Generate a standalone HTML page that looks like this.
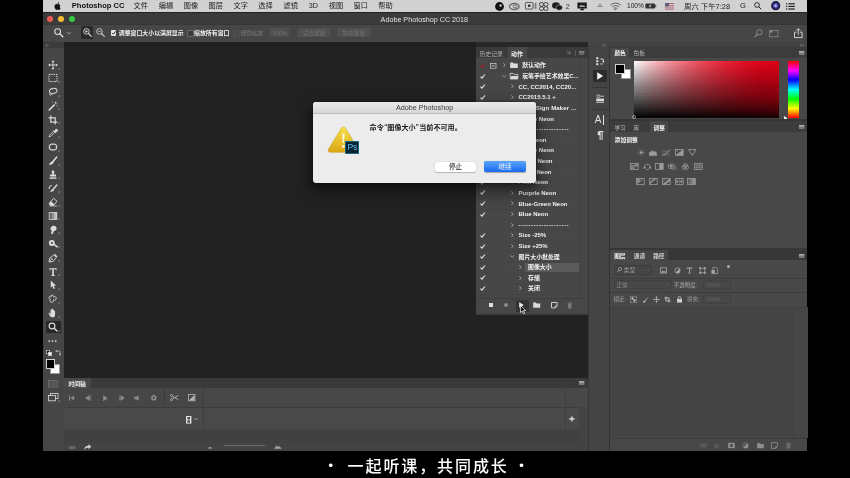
<!DOCTYPE html>
<html lang="zh-CN"><head><meta charset="utf-8"><title>Adobe Photoshop CC 2018</title>
<style>
html,body{margin:0;padding:0;background:#000;}
body{width:850px;height:478px;overflow:hidden;position:relative;font-family:"Liberation Sans","Noto Sans CJK SC",sans-serif;}
#root{position:absolute;left:0;top:0;width:850px;height:478px;overflow:hidden;background:#000;filter:blur(.4px);}
#root div,#root svg,#root span.t{position:absolute;display:block;}
span.t{white-space:nowrap;}
svg{overflow:visible;}
</style></head><body><div id="root">

<div style="left:42.6px;top:0px;width:764.6px;height:11.6px;background:#d1d1d1;"></div>
<svg style="left:54.2px;top:1.5px;" width="7.2" height="8.6" viewBox="0 0 12 14"><path d="M6 4C5 3.200 3.600 3 2.400 3.800C.6 5 .4 7.600 1.400 9.800C2.200 11.600 3.200 13 4.400 13C5.200 13 5.400 12.500 6.300 12.500C7.200 12.500 7.400 13 8.200 13C9.400 13 10.400 11.400 11 10C9.600 9.400 9 7.400 10.600 5.600C9.600 3.600 7.600 3.200 6 4Z" fill="#111"/><path d="M6 3.400C6 1.800 7 .6 8.400 .4C8.600 2 7.400 3.400 6 3.400Z" fill="#111"/></svg>
<span class="t" style="left:71.8px;top:1.49px;font-size:7.6px;line-height:10px;color:#111;font-weight:bold;">Photoshop CC</span>
<span class="t" style="left:133.6px;top:1.12px;font-size:7.2px;line-height:9px;color:#1a1a1a;font-weight:normal;">文件</span>
<span class="t" style="left:158.7px;top:1.12px;font-size:7.2px;line-height:9px;color:#1a1a1a;font-weight:normal;">编辑</span>
<span class="t" style="left:183.8px;top:1.12px;font-size:7.2px;line-height:9px;color:#1a1a1a;font-weight:normal;">图像</span>
<span class="t" style="left:208.6px;top:1.12px;font-size:7.2px;line-height:9px;color:#1a1a1a;font-weight:normal;">图层</span>
<span class="t" style="left:233.5px;top:1.12px;font-size:7.2px;line-height:9px;color:#1a1a1a;font-weight:normal;">文字</span>
<span class="t" style="left:258.3px;top:1.12px;font-size:7.2px;line-height:9px;color:#1a1a1a;font-weight:normal;">选择</span>
<span class="t" style="left:283.5px;top:1.12px;font-size:7.2px;line-height:9px;color:#1a1a1a;font-weight:normal;">滤镜</span>
<span class="t" style="left:308.8px;top:1.12px;font-size:7.2px;line-height:9px;color:#1a1a1a;font-weight:normal;">3D</span>
<span class="t" style="left:328.8px;top:1.12px;font-size:7.2px;line-height:9px;color:#1a1a1a;font-weight:normal;">视图</span>
<span class="t" style="left:353.5px;top:1.12px;font-size:7.2px;line-height:9px;color:#1a1a1a;font-weight:normal;">窗口</span>
<span class="t" style="left:378.3px;top:1.12px;font-size:7.2px;line-height:9px;color:#1a1a1a;font-weight:normal;">帮助</span>
<svg style="left:494.6px;top:1.6px;" width="9" height="9" viewBox="0 0 9 9"><circle cx="4.5" cy="4.5" r="4.4" fill="#111"/><circle cx="5.6" cy="3.6" r="1.3" fill="#bbb"/></svg>
<svg style="left:509.4px;top:2.6px;" width="10.6" height="7" viewBox="0 0 10.6 7"><ellipse cx="5.3" cy="3.5" rx="4.8" ry="3" fill="none" stroke="#6a6a6a" stroke-width="1.3"/><ellipse cx="6.2" cy="3.5" rx="2" ry="1.4" fill="none" stroke="#6a6a6a" stroke-width="1"/></svg>
<svg style="left:524.7px;top:2.2px;" width="11.2" height="7.6" viewBox="0 0 11.2 7.6"><rect x=".4" y=".5" width="7.600" height="6.600" rx=".8" fill="none" stroke="#333" stroke-width=".75"/><circle cx="4.200" cy="3.800" r="1.300" fill="#222"/><path d="M9 2.200v.9M9 4.600v.9" stroke="#333" stroke-width=".8"/><path d="M10.800 .6v6.400" stroke="#333" stroke-width=".8"/></svg>
<svg style="left:538.8px;top:1.6px;" width="9.4" height="9" viewBox="0 0 9.4 9"><g fill="none" stroke="#2a2a2a" stroke-width=".85"><rect x=".5" y=".5" width="4" height="3.800" rx="1.700"/><rect x="4.900" y=".5" width="4" height="3.800" rx="1.700"/><rect x=".5" y="4.700" width="4" height="3.800" rx="1.700"/><rect x="4.900" y="4.700" width="4" height="3.800" rx="1.700"/></g></svg>
<svg style="left:551.8px;top:1.8px;" width="10.6" height="8.6" viewBox="0 0 10.6 8.6"><ellipse cx="4" cy="3.4" rx="3.900" ry="3.200" fill="#1d1d1d"/><ellipse cx="7.2" cy="5.6" rx="3.300" ry="2.700" fill="#1d1d1d" stroke="#d1d1d1" stroke-width=".5"/></svg>
<span class="t" style="left:565.8px;top:2.12px;font-size:7.2px;line-height:9px;color:#333;font-weight:normal;">2</span>
<svg style="left:577px;top:1.6px;" width="10.2" height="8.8" viewBox="0 0 10.2 8.8"><path d="M.4.4h9.400v6h-9.400z" fill="#1b1b1b"/><path d="M2 5l2.200-2.500 1.600 1.500 1.200-1 1.400 2z" fill="#aaa"/><path d="M3 8.200h4.200l-.8-1.700h-2.600z" fill="#1b1b1b"/></svg>
<svg style="left:597px;top:3.2px;" width="6" height="6" viewBox="0 0 6 6"><path d="M3 .3l1.800 2h-3.600z" fill="#8e8e8e"/><rect x=".3" y="2.700" width="5.400" height="1.400" rx=".6" fill="#8e8e8e"/><path d="M2.200 4.500h1.600l-.8 1.200z" fill="#a0a0a0"/></svg>
<svg style="left:610px;top:2px;" width="11" height="8" viewBox="0 0 11 8"><g fill="none" stroke="#484848" stroke-width=".8" stroke-linecap="round"><path d="M.6 2.900a7 7 0 0 1 9.800 0"/><path d="M2.300 4.700a4.600 4.600 0 0 1 6.400 0"/><path d="M4 6.300a2.200 2.200 0 0 1 3 0"/></g><circle cx="5.500" cy="7.400" r=".7" fill="#444"/></svg>
<span class="t" style="left:627px;top:1.32px;font-size:6.6px;line-height:9px;color:#222;font-weight:normal;">100%</span>
<svg style="left:645.4px;top:3px;" width="11.4" height="6" viewBox="0 0 11.4 6"><rect x=".4" y=".4" width="9.600" height="5.200" rx="1" fill="#333"/><rect x="10.300" y="1.800" width=".9" height="2.400" fill="#333"/><path d="M5.600 .8l-2 2.500h1.500l-.7 1.900 2.200-2.600h-1.500z" fill="#d1d1d1"/></svg>
<svg style="left:664.6px;top:2.6px;" width="9" height="6.6" viewBox="0 0 9 6.6"><rect x="0" y="0.00" width="9" height=".94" fill="#ac5e6a"/><rect x="0" y="0.94" width="9" height=".94" fill="#d6cacc"/><rect x="0" y="1.88" width="9" height=".94" fill="#ac5e6a"/><rect x="0" y="2.82" width="9" height=".94" fill="#d6cacc"/><rect x="0" y="3.76" width="9" height=".94" fill="#ac5e6a"/><rect x="0" y="4.70" width="9" height=".94" fill="#d6cacc"/><rect x="0" y="5.64" width="9" height=".94" fill="#ac5e6a"/><rect x="0" y="0" width="4" height="3.500" fill="#5e5c7c"/></svg>
<span class="t" style="left:684px;top:2.05px;font-size:7.4px;line-height:9px;color:#1a1a1a;font-weight:normal;">周六 下午7:28</span>
<span class="t" style="left:740px;top:1.49px;font-size:7.6px;line-height:10px;color:#222;font-weight:normal;">G</span>
<svg style="left:753.5px;top:2.2px;" width="7.4" height="7.4" viewBox="0 0 7.4 7.4"><circle cx="3" cy="3" r="2.400" fill="none" stroke="#222" stroke-width=".9"/><path d="M4.800 4.800l2.200 2.200" stroke="#222" stroke-width="1" stroke-linecap="round"/></svg>
<svg style="left:770.7px;top:1.3px;" width="9.4" height="9.4" viewBox="0 0 9.4 9.4"><defs><radialGradient id="siri" cx=".5" cy=".5" r=".5"><stop offset="0" stop-color="#f0e8f8"/><stop offset=".3" stop-color="#7a6cd0"/><stop offset=".6" stop-color="#2a2c78"/><stop offset="1" stop-color="#101228"/></radialGradient></defs><circle cx="4.700" cy="4.700" r="4.600" fill="url(#siri)"/></svg>
<svg style="left:785.8px;top:2.6px;" width="9" height="7" viewBox="0 0 9 7"><g fill="#222"><rect x="0" y=".2" width="1.300" height="1.200"/><rect x="2.400" y=".2" width="6.400" height="1.200"/><rect x="0" y="2.800" width="1.300" height="1.200"/><rect x="2.400" y="2.800" width="6.400" height="1.200"/><rect x="0" y="5.400" width="1.300" height="1.200"/><rect x="2.400" y="5.400" width="6.400" height="1.200"/></g></svg>
<div style="left:42.6px;top:11.6px;width:764.6px;height:12.6px;background:#3b3b3b;"></div>
<div style="left:43px;top:11.6px;width:764px;height:0.6px;background:#222;"></div>
<div style="left:47.3px;top:16.2px;width:6.2px;height:6.2px;background:#ee5b54;border-radius:50%"></div>
<div style="left:58.1px;top:16.2px;width:6.2px;height:6.2px;background:#f5bd2f;border-radius:50%"></div>
<div style="left:68.80000000000001px;top:16.2px;width:6.2px;height:6.2px;background:#2fc840;border-radius:50%"></div>
<span class="t" style="left:380.6px;top:15.12px;font-size:7.2px;line-height:9px;color:#e0e0e0;font-weight:normal;">Adobe Photoshop CC 2018</span>
<div style="left:42.6px;top:24.2px;width:764.6px;height:18.2px;background:#464646;"></div>
<div style="left:43px;top:23.8px;width:764px;height:0.8px;background:#363636;"></div>
<svg style="left:54px;top:28px;" width="9.5" height="9.5" viewBox="0 0 9.5 9.5"><circle cx="3.600" cy="3.600" r="2.900" fill="none" stroke="#ddd" stroke-width="1.100"/><path d="M5.800 5.800l3 3" stroke="#ddd" stroke-width="1.400" stroke-linecap="round"/></svg>
<svg style="left:66.5px;top:32.4px;" width="4" height="2.6" viewBox="0 0 4 2.6"><path d="M.3.300l1.700 1.700 1.700-1.700" fill="none" stroke="#bbb" stroke-width=".8"/></svg>
<div style="left:80.6px;top:26.4px;width:12.4px;height:12.6px;background:#2a2a2a;border-radius:1px"></div>
<svg style="left:82.6px;top:28.4px;" width="9" height="9" viewBox="0 0 9 9"><circle cx="3.400" cy="3.400" r="2.800" fill="none" stroke="#ddd" stroke-width=".9"/><path d="M5.500 5.500l2.800 2.800" stroke="#ddd" stroke-width="1.200" stroke-linecap="round"/><path d="M2 3.400h2.800M3.400 2v2.800" stroke="#ddd" stroke-width=".8"/></svg>
<svg style="left:96px;top:28.4px;" width="9" height="9" viewBox="0 0 9 9"><circle cx="3.400" cy="3.400" r="2.800" fill="none" stroke="#ccc" stroke-width=".9"/><path d="M5.500 5.500l2.800 2.800" stroke="#ccc" stroke-width="1.200" stroke-linecap="round"/><path d="M2 3.400h2.800" stroke="#ccc" stroke-width=".8"/></svg>
<div style="left:110.6px;top:30.2px;width:5.6px;height:5.6px;background:#e6e6e6;border-radius:1px"></div>
<svg style="left:110.6px;top:30.2px;" width="5.6" height="5.6" viewBox="0 0 5.6 5.6"><path d="M1.200 2.900l1.200 1.300 2.200-2.800" fill="none" stroke="#222" stroke-width="1"/></svg>
<span class="t" style="left:118.8px;top:29.05px;font-size:5.9px;line-height:8px;color:#eee;font-weight:bold;">调整窗口大小以满屏显示</span>
<div style="left:187.2px;top:30.2px;width:5.2px;height:5.2px;background:#3a3a3a;border:.5px solid #666;border-radius:1px"></div>
<span class="t" style="left:194.1px;top:29.05px;font-size:5.9px;line-height:8px;color:#eee;font-weight:bold;">缩放所有窗口</span>
<div style="left:233px;top:30.4px;width:5px;height:5px;background:#484848;border:.5px solid #4f4f4f"></div>
<span class="t" style="left:240.6px;top:29.15px;font-size:5.6px;line-height:8px;color:#777;font-weight:normal;">细微缩放</span>
<div style="left:270px;top:28.2px;width:19.2px;height:8.6px;background:#505050;border-radius:1.500px"></div>
<span class="t" style="left:270px;top:29.15px;width:19.2px;text-align:center;font-size:5.6px;line-height:8px;color:#747474;font-weight:normal;">100%</span>
<div style="left:298px;top:28.2px;width:32.4px;height:8.6px;background:#505050;border-radius:1.500px"></div>
<span class="t" style="left:298px;top:29.15px;width:32.4px;text-align:center;font-size:5.6px;line-height:8px;color:#747474;font-weight:normal;">适合屏幕</span>
<div style="left:337px;top:28.2px;width:33.6px;height:8.6px;background:#505050;border-radius:1.500px"></div>
<span class="t" style="left:337px;top:29.15px;width:33.6px;text-align:center;font-size:5.6px;line-height:8px;color:#747474;font-weight:normal;">填充屏幕</span>
<svg style="left:753.5px;top:29.4px;" width="9" height="8.4" viewBox="0 0 9 8.4"><circle cx="5.400" cy="3.300" r="2.700" fill="none" stroke="#8a8a8a" stroke-width="1"/><path d="M3.400 5.300l-2.600 2.600" stroke="#8a8a8a" stroke-width="1.200" stroke-linecap="round"/></svg>
<svg style="left:768.8px;top:29.8px;" width="9.4" height="7.2" viewBox="0 0 9.4 7.2"><rect x=".4" y=".4" width="8.600" height="6.400" fill="none" stroke="#8a8a8a" stroke-width=".8"/><rect x="1" y="1" width="2.600" height="1.600" fill="#8a8a8a"/></svg>
<svg style="left:793.5px;top:27.6px;" width="8.6" height="10" viewBox="0 0 8.6 10"><path d="M2.500 4.200h-2v5.400h7.600v-5.400h-2" fill="none" stroke="#e0e0e0" stroke-width=".9"/><path d="M4.300 6.600v-5.800M2.400 2.500l1.900-1.900 1.900 1.900" fill="none" stroke="#e0e0e0" stroke-width=".9"/></svg>
<div style="left:43px;top:42.4px;width:764px;height:408.8px;background:#282828;"></div>
<div style="left:64px;top:47.2px;width:524px;height:330.6px;background:#222222;"></div>
<div style="left:64px;top:42.4px;width:412px;height:5px;background:#1f1f1f;"></div>
<div style="left:42.6px;top:42.4px;width:21.2px;height:408.8px;background:#464646;"></div>
<div style="left:42.6px;top:42.4px;width:21.2px;height:5.8px;background:#3b3b3b;"></div>
<svg style="left:45.2px;top:44px;" width="4" height="3" viewBox="0 0 4 3"><path d="M.3.300l1.200 1.200-1.200 1.200M2 .3l1.200 1.200-1.200 1.200" fill="none" stroke="#aaa" stroke-width=".5"/></svg>
<svg style="left:47.7px;top:60.3px;" width="10" height="10" viewBox="0 0 10 10"><path d="M5 1v8M1 5h8" stroke="#dcdcdc" stroke-width=".9"/><path d="M5 .2l1.500 1.800h-3zM5 9.800l1.500-1.800h-3zM.2 5l1.800-1.500v3zM9.800 5l-1.800-1.500v3z" fill="#dcdcdc"/></svg>
<svg style="left:58.2px;top:67.89999999999999px;" width="1.6" height="1.6" viewBox="0 0 1.6 1.6"><path d="M1.600 0v1.600h-1.600z" fill="#aaa"/></svg>
<svg style="left:47.7px;top:73.2px;" width="10" height="10" viewBox="0 0 10 10"><rect x="1" y="1.400" width="8" height="7.200" fill="none" stroke="#dcdcdc" stroke-width="1" stroke-dasharray="1.400 .9"/></svg>
<svg style="left:58.2px;top:80.8px;" width="1.6" height="1.6" viewBox="0 0 1.6 1.6"><path d="M1.600 0v1.600h-1.600z" fill="#aaa"/></svg>
<svg style="left:47.7px;top:87.1px;" width="10" height="10" viewBox="0 0 10 10"><ellipse cx="5.200" cy="4" rx="3.800" ry="2.600" fill="none" stroke="#dcdcdc" stroke-width="1" transform="rotate(-12 5 4)"/><path d="M2.600 6c-1.200.4-1.400 1.600-.4 2.200 1 .4 1.600-.6 1-1.400" fill="none" stroke="#dcdcdc" stroke-width=".8"/></svg>
<svg style="left:58.2px;top:94.69999999999999px;" width="1.6" height="1.6" viewBox="0 0 1.6 1.6"><path d="M1.600 0v1.600h-1.600z" fill="#aaa"/></svg>
<svg style="left:47.7px;top:100.7px;" width="10" height="10" viewBox="0 0 10 10"><path d="M1.200 9l5-5" stroke="#dcdcdc" stroke-width="1.700" stroke-linecap="round"/><path d="M7.600 .6v2.200M6.500 1.700h2.200M8.600 4.400l.9.9M4.200 .9l.8.8M8.800 2.800h.9" stroke="#dcdcdc" stroke-width=".7"/></svg>
<svg style="left:58.2px;top:108.3px;" width="1.6" height="1.6" viewBox="0 0 1.6 1.6"><path d="M1.600 0v1.600h-1.600z" fill="#aaa"/></svg>
<svg style="left:47.7px;top:114.7px;" width="10" height="10" viewBox="0 0 10 10"><path d="M2.800 .6v6.600h6.600M.6 2.800h6.600v6.600" fill="none" stroke="#dcdcdc" stroke-width="1.200"/></svg>
<svg style="left:58.2px;top:122.3px;" width="1.6" height="1.6" viewBox="0 0 1.6 1.6"><path d="M1.600 0v1.600h-1.600z" fill="#aaa"/></svg>
<svg style="left:47.7px;top:128px;" width="10" height="10" viewBox="0 0 10 10"><path d="M1 9l.6-1.800 3.800-3.800 1.200 1.200-3.800 3.800z" fill="none" stroke="#dcdcdc" stroke-width=".8"/><path d="M5.200 2.600l2.200 2.200M6 3.400l1.500-1.800c.5-.6 1.400-.6 1.800-.1.500.5.400 1.300-.1 1.800l-1.800 1.500z" fill="#dcdcdc" stroke="#dcdcdc" stroke-width=".6"/></svg>
<svg style="left:58.2px;top:135.6px;" width="1.6" height="1.6" viewBox="0 0 1.6 1.6"><path d="M1.600 0v1.600h-1.600z" fill="#aaa"/></svg>
<svg style="left:47.7px;top:142px;" width="10" height="10" viewBox="0 0 10 10"><rect x="1.600" y="2.200" width="6.800" height="5.600" rx="1.800" fill="none" stroke="#dcdcdc" stroke-width="1.100"/><path d="M.6 4h1M.6 6h1M8.400 4h1M8.400 6h1M4 1.200v1M6 1.200v1M4 7.800v1M6 7.800v1" stroke="#dcdcdc" stroke-width=".7"/></svg>
<svg style="left:58.2px;top:149.6px;" width="1.6" height="1.6" viewBox="0 0 1.6 1.6"><path d="M1.600 0v1.600h-1.600z" fill="#aaa"/></svg>
<svg style="left:47.7px;top:155.9px;" width="10" height="10" viewBox="0 0 10 10"><path d="M8.600 1.200l-3.800 4.600" stroke="#dcdcdc" stroke-width="1.600" stroke-linecap="round"/><path d="M4.400 5.400c-1.800-.2-2 1.800-3.600 3 2 .8 4.400-.2 4.800-1.800z" fill="#dcdcdc"/></svg>
<svg style="left:58.2px;top:163.5px;" width="1.6" height="1.6" viewBox="0 0 1.6 1.6"><path d="M1.600 0v1.600h-1.600z" fill="#aaa"/></svg>
<svg style="left:47.7px;top:169.5px;" width="10" height="10" viewBox="0 0 10 10"><path d="M3.600 1.800a1.400 1.400 0 1 1 2.800 0c0 .9-.7 1.400-.7 2.600h2.300v2h-6v-2h2.300c0-1.200-.7-1.700-.7-2.600z" fill="#dcdcdc"/><rect x="1.600" y="7.400" width="6.800" height="1.400" fill="#dcdcdc"/></svg>
<svg style="left:58.2px;top:177.1px;" width="1.6" height="1.6" viewBox="0 0 1.6 1.6"><path d="M1.600 0v1.600h-1.600z" fill="#aaa"/></svg>
<svg style="left:47.7px;top:183.5px;" width="10" height="10" viewBox="0 0 10 10"><path d="M8.800 1l-3.400 4" stroke="#dcdcdc" stroke-width="1.400" stroke-linecap="round"/><path d="M5 5c-1.500-.2-1.700 1.500-3 2.500 1.700.7 3.700-.2 4-1.500z" fill="#dcdcdc"/><path d="M1.200 4.200a2.800 2.800 0 0 1 2.800-2.800" fill="none" stroke="#dcdcdc" stroke-width=".9"/><path d="M.2 3.400l1 1.600 1.200-1.200z" fill="#dcdcdc"/></svg>
<svg style="left:58.2px;top:191.1px;" width="1.6" height="1.6" viewBox="0 0 1.6 1.6"><path d="M1.600 0v1.600h-1.600z" fill="#aaa"/></svg>
<svg style="left:47.7px;top:197.3px;" width="10" height="10" viewBox="0 0 10 10"><path d="M5.600 1.200l3.400 3-3.400 4.200h-2.800l-1.800-1.600z" fill="none" stroke="#dcdcdc" stroke-width=".9"/><path d="M3 4.200l3.200 3-1 1.200h-2.400l-1.800-1.600z" fill="#dcdcdc"/><path d="M1.400 9h7.600" stroke="#dcdcdc" stroke-width=".7"/></svg>
<svg style="left:58.2px;top:204.9px;" width="1.6" height="1.6" viewBox="0 0 1.6 1.6"><path d="M1.600 0v1.600h-1.600z" fill="#aaa"/></svg>
<svg style="left:47.7px;top:210.8px;" width="10" height="10" viewBox="0 0 10 10"><defs><linearGradient id="gr"><stop offset="0" stop-color="#4a4a4a"/><stop offset="1" stop-color="#d8d8d8"/></linearGradient></defs><rect x="1.200" y="1.600" width="7.600" height="6.800" fill="url(#gr)" stroke="#dcdcdc" stroke-width=".8"/></svg>
<svg style="left:58.2px;top:218.4px;" width="1.6" height="1.6" viewBox="0 0 1.6 1.6"><path d="M1.600 0v1.600h-1.600z" fill="#aaa"/></svg>
<svg style="left:47.7px;top:224.8px;" width="10" height="10" viewBox="0 0 10 10"><path d="M5 .8c2-.4 3.600.8 3.600 2.600 0 1.600-1.200 2.400-2.600 2.600l-1.400 3.200-1.600-.6.800-2.800c-1.400-.8-1.600-2.400-.8-3.600.4-.8 1.200-1.200 2-1.400z" fill="#dcdcdc"/></svg>
<svg style="left:58.2px;top:232.4px;" width="1.6" height="1.6" viewBox="0 0 1.6 1.6"><path d="M1.600 0v1.600h-1.600z" fill="#aaa"/></svg>
<svg style="left:47.7px;top:238.8px;" width="10" height="10" viewBox="0 0 10 10"><circle cx="3.800" cy="4" r="2.900" fill="#dcdcdc"/><path d="M6 5.400l3.200 2.400" stroke="#dcdcdc" stroke-width="1.500" stroke-linecap="round"/><circle cx="3.800" cy="4" r="1.100" fill="#464646"/></svg>
<svg style="left:58.2px;top:246.4px;" width="1.6" height="1.6" viewBox="0 0 1.6 1.6"><path d="M1.600 0v1.600h-1.600z" fill="#aaa"/></svg>
<svg style="left:47.7px;top:252.7px;" width="10" height="10" viewBox="0 0 10 10"><path d="M1 9l.8-4 4-3 2.400 2.400-3 4z" fill="none" stroke="#dcdcdc" stroke-width=".9"/><path d="M1 9l2.600-2.600" stroke="#dcdcdc" stroke-width=".7"/><circle cx="4" cy="6" r=".8" fill="#dcdcdc"/><path d="M6.400 1.200l2.600 2.600" stroke="#dcdcdc" stroke-width="1.200"/></svg>
<svg style="left:58.2px;top:260.3px;" width="1.6" height="1.6" viewBox="0 0 1.6 1.6"><path d="M1.600 0v1.600h-1.600z" fill="#aaa"/></svg>
<svg style="left:47.7px;top:266.7px;" width="10" height="10" viewBox="0 0 10 10"><path d="M1.400 1.200h7.200v2h-.8l-.3-1h-1.700v5.800l1 .3v.6h-3.600v-.6l1-.3v-5.800h-1.700l-.3 1h-.8z" fill="#dcdcdc"/></svg>
<svg style="left:58.2px;top:274.3px;" width="1.6" height="1.6" viewBox="0 0 1.6 1.6"><path d="M1.600 0v1.600h-1.600z" fill="#aaa"/></svg>
<svg style="left:47.7px;top:280.1px;" width="10" height="10" viewBox="0 0 10 10"><path d="M2.800 .6v7.200l1.700-1.600 1.200 2.800 1.300-.6-1.200-2.700h2.300z" fill="#dcdcdc"/></svg>
<svg style="left:58.2px;top:287.70000000000005px;" width="1.6" height="1.6" viewBox="0 0 1.6 1.6"><path d="M1.600 0v1.600h-1.600z" fill="#aaa"/></svg>
<svg style="left:47.7px;top:294.4px;" width="10" height="10" viewBox="0 0 10 10"><path d="M3.400 1.400c1.200-.8 2.600.2 2.200 1.400 1.400-.6 3 .4 2.600 2-.4 1.400-2 1.600-2.600 1 .4 1.400-.6 2.800-2.200 2.400-1.600-.4-1.800-2-1-2.800-1.200-.2-1.800-1.600-1-2.600.6-.8 1.600-.8 2-.2-.6-.2-.4-.4 0-1.200z" fill="none" stroke="#dcdcdc" stroke-width=".9"/></svg>
<svg style="left:58.2px;top:302.0px;" width="1.6" height="1.6" viewBox="0 0 1.6 1.6"><path d="M1.600 0v1.600h-1.600z" fill="#aaa"/></svg>
<svg style="left:47.7px;top:308px;" width="10" height="10" viewBox="0 0 10 10"><path d="M3 9.200c-1-1.200-2-2.800-2.400-3.800-.2-.6.600-1 1-.4l.9 1.200v-4.200c0-.8 1-.8 1.100 0v-1c.1-.8 1.100-.8 1.200 0v1c.1-.8 1.100-.7 1.200 0v1.200c.1-.7 1.100-.6 1.100.1v3.300c0 1-.4 1.800-.9 2.600z" fill="#dcdcdc"/></svg>
<svg style="left:58.2px;top:315.6px;" width="1.6" height="1.6" viewBox="0 0 1.6 1.6"><path d="M1.600 0v1.600h-1.600z" fill="#aaa"/></svg>
<div style="left:45.6px;top:320.8px;width:15.1px;height:12px;background:#272727;border-radius:1px"></div>
<svg style="left:47.7px;top:322px;" width="10" height="10" viewBox="0 0 10 10"><circle cx="4" cy="4" r="2.900" fill="none" stroke="#dcdcdc" stroke-width="1.100"/><path d="M6.200 6.200l2.800 2.800" stroke="#dcdcdc" stroke-width="1.400" stroke-linecap="round"/></svg>
<svg style="left:58.2px;top:329.6px;" width="1.6" height="1.6" viewBox="0 0 1.6 1.6"><path d="M1.600 0v1.600h-1.600z" fill="#aaa"/></svg>
<svg style="left:48.4px;top:339.6px;" width="9" height="2.4" viewBox="0 0 9 2.4"><circle cx="1.100" cy="1.100" r=".9" fill="#dcdcdc"/><circle cx="4.400" cy="1.100" r=".9" fill="#dcdcdc"/><circle cx="7.700" cy="1.100" r=".9" fill="#dcdcdc"/></svg>
<svg style="left:45.6px;top:350.4px;" width="6" height="6" viewBox="0 0 6 6"><rect x=".3" y=".3" width="3.400" height="3.400" fill="#111" stroke="#ddd" stroke-width=".6"/><rect x="2.300" y="2.300" width="3.400" height="3.400" fill="#eee" stroke="#ddd" stroke-width=".5"/></svg>
<svg style="left:54.6px;top:350px;" width="6" height="6" viewBox="0 0 6 6"><path d="M1.400 1h2.200a1.400 1.400 0 0 1 1.400 1.400v2.200" fill="none" stroke="#dcdcdc" stroke-width=".7"/><path d="M.2 1l1.600-1.100v2.200zM5 5.800l-1.100-1.600h2.200z" fill="#dcdcdc"/></svg>
<div style="left:50.4px;top:364.3px;width:9.7px;height:9.6px;background:#fff;border:.5px solid #999;box-sizing:border-box"></div>
<div style="left:45.5px;top:358.5px;width:9.9px;height:10px;background:#000;border:.8px solid #d0d0d0;box-sizing:border-box"></div>
<svg style="left:48px;top:380.4px;" width="10" height="7.4" viewBox="0 0 10 7.4"><rect x=".4" y=".4" width="9.200" height="6.600" fill="#4e4e4e" stroke="#777" stroke-width=".7"/><circle cx="5" cy="3.700" r="1.800" fill="none" stroke="#777" stroke-width=".7" stroke-dasharray="1 .6"/></svg>
<svg style="left:47.8px;top:393.4px;" width="10.4" height="8.4" viewBox="0 0 10.4 8.4"><rect x="2.600" y=".4" width="7.400" height="5.200" fill="none" stroke="#dcdcdc" stroke-width=".8"/><rect x=".4" y="2.600" width="7" height="5.200" fill="#464646" stroke="#dcdcdc" stroke-width=".8"/></svg>
<svg style="left:58.4px;top:400.4px;" width="1.6" height="1.6" viewBox="0 0 1.6 1.6"><path d="M1.600 0v1.600h-1.600z" fill="#aaa"/></svg>
<div style="left:63.8px;top:377.8px;width:523.8px;height:73.4px;background:#464646;"></div>
<div style="left:63.8px;top:377.8px;width:523.8px;height:9.8px;background:#3a3a3a;"></div>
<div style="left:63.8px;top:378.2px;width:27.2px;height:9.6px;background:#484848;"></div>
<span class="t" style="left:68.4px;top:380.08px;font-size:5.8px;line-height:8px;color:#f0f0f0;font-weight:bold;">时间轴</span>
<svg style="left:578.8px;top:381.4px;" width="5.4" height="3.6" viewBox="0 0 5.4 3.6"><rect x="0" y="0" width="5.400" height=".9" fill="#bbb"/><rect x="0" y="1.300" width="5.400" height=".9" fill="#bbb"/><rect x="0" y="2.600" width="5.400" height=".9" fill="#bbb"/></svg>
<div style="left:63.8px;top:387.6px;width:523.8px;height:19.4px;background:#464646;"></div>
<div style="left:203px;top:387.6px;width:384.6px;height:19.4px;background:#484848;"></div>
<div style="left:63.8px;top:407px;width:523.8px;height:22.3px;background:#494949;"></div>
<div style="left:63.8px;top:406.6px;width:523.8px;height:0.7px;background:#3c3c3c;"></div>
<div style="left:63.8px;top:429.3px;width:523.8px;height:14px;background:#414141;"></div>
<div style="left:63.8px;top:443.3px;width:523.8px;height:7.9px;background:#434343;"></div>
<div style="left:578.7px;top:407px;width:8.9px;height:44.2px;background:#434343;"></div>
<div style="left:164px;top:389px;width:0.7px;height:17px;background:#3a3a3a;"></div>
<div style="left:202.8px;top:387.6px;width:0.8px;height:41.7px;background:#3e3e3e;"></div>
<div style="left:565px;top:387.6px;width:0.7px;height:41.7px;background:#3f3f3f;"></div>
<svg style="left:69.2px;top:394.7px;" width="5.4" height="6" viewBox="0 0 5.4 6"><rect x="0" y=".4" width="1" height="5.200" fill="#8c8c8c"/><path d="M5.200 .4v5.200l-3.800-2.600z" fill="#8c8c8c"/></svg>
<svg style="left:85.2px;top:394.7px;" width="6" height="6" viewBox="0 0 6 6"><path d="M4 .4v5.200l-3.800-2.600z" fill="#8c8c8c"/><rect x="4.400" y=".4" width="1.200" height="5.200" fill="#8c8c8c"/></svg>
<svg style="left:102.6px;top:394.5px;" width="5" height="6.4" viewBox="0 0 5 6.4"><path d="M.2 .2v6l4.600-3z" fill="#8c8c8c"/></svg>
<svg style="left:118.6px;top:394.7px;" width="6" height="6" viewBox="0 0 6 6"><rect x=".4" y=".4" width="1.200" height="5.200" fill="#8c8c8c"/><path d="M2 .4v5.200l3.800-2.600z" fill="#8c8c8c"/></svg>
<svg style="left:134.2px;top:394.7px;" width="5" height="6" viewBox="0 0 5 6"><path d="M4.600 .2v5.600l-2.400-1.600h-2v-2.400h2z" fill="#8c8c8c"/></svg>
<svg style="left:151.4px;top:394.9px;" width="5.6" height="5.6" viewBox="0 0 5.6 5.6"><circle cx="2.800" cy="2.800" r="1.900" fill="none" stroke="#8c8c8c" stroke-width="1.500"/><circle cx="2.800" cy="2.800" r="2.600" fill="none" stroke="#8c8c8c" stroke-width=".7" stroke-dasharray=".8 .8"/></svg>
<svg style="left:170px;top:394.09999999999997px;" width="8.6" height="7.2" viewBox="0 0 8.6 7.2"><circle cx="1.500" cy="1.600" r="1.100" fill="none" stroke="#b4b4b4" stroke-width=".8"/><circle cx="1.500" cy="5.600" r="1.100" fill="none" stroke="#b4b4b4" stroke-width=".8"/><path d="M2.400 2.200l6 3.600M2.400 5l6-3.600" stroke="#b4b4b4" stroke-width=".9"/></svg>
<svg style="left:187.6px;top:394.09999999999997px;" width="7.4" height="7.2" viewBox="0 0 7.4 7.2"><rect x=".4" y=".4" width="6.600" height="6.400" fill="none" stroke="#b4b4b4" stroke-width=".8"/><path d="M6.600 .8v5.800h-5.800z" fill="#b4b4b4"/></svg>
<svg style="left:186.2px;top:415.6px;" width="5.4" height="7.6" viewBox="0 0 5.4 7.6"><rect x="0" y="0" width="5.400" height="7.600" fill="#e4e4e4"/><rect x="1.400" y="1" width="2.600" height="2.400" fill="#494949"/><rect x="1.400" y="4.300" width="2.600" height="2.400" fill="#494949"/></svg>
<svg style="left:193.6px;top:418.4px;" width="3.6" height="2.4" viewBox="0 0 3.6 2.4"><path d="M.3.300l1.500 1.500 1.500-1.500" fill="none" stroke="#ccc" stroke-width=".8"/></svg>
<svg style="left:68.6px;top:445.6px;" width="6.2" height="3.2" viewBox="0 0 6.2 3.2"><rect x="0" y="0" width="6.200" height="3.200" fill="#6e6e6e"/><path d="M1.600 0v3.200M3.100 0v3.200M4.600 0v3.200" stroke="#464646" stroke-width=".4"/></svg>
<svg style="left:83.6px;top:443.8px;" width="7.6" height="6.4" viewBox="0 0 7.6 6.4"><path d="M7.400 2.600l-3-2.400v1.600c-2.400 0-4 1.400-4.200 4.200 1-1.600 2.200-2.200 4.200-2.200v1.400z" fill="#d0d0d0"/></svg>
<svg style="left:208px;top:446px;" width="4.6" height="2.6" viewBox="0 0 4.6 2.6"><path d="M0 2.600l1.600-1.800.8.800.6-.6 1.600 1.600z" fill="#aaa"/></svg>
<div style="left:223.8px;top:445.3px;width:41.2px;height:1.1px;background:#6c6c6c;"></div>
<svg style="left:274.4px;top:445.2px;" width="7.8" height="3.8" viewBox="0 0 7.8 3.8"><path d="M0 3.800l2.800-3.400 1.400 1.500.9-.9 2.700 2.800z" fill="#a4a4a4"/></svg>
<svg style="left:568.8px;top:416.2px;" width="5.8" height="5.8" viewBox="0 0 5.8 5.8"><path d="M2.900 .2v5.400M.2 2.900h5.400" stroke="#eee" stroke-width="1.100"/></svg>
<div style="left:587.6px;top:42.4px;width:22px;height:408.8px;background:#373737;"></div>
<div style="left:588.5px;top:42.4px;width:20.9px;height:408.8px;background:#444444;"></div>
<div style="left:588.4px;top:42.4px;width:21.4px;height:5.4px;background:#434343;"></div>
<svg style="left:602px;top:43.8px;" width="3.8" height="2.6" viewBox="0 0 3.8 2.6"><path d="M1.500 .2l-1.200 1.100 1.200 1.100M3.300 .2l-1.200 1.100 1.200 1.100" fill="none" stroke="#aaa" stroke-width=".5"/></svg>
<svg style="left:595.6px;top:56.6px;" width="8.6" height="9" viewBox="0 0 8.6 9"><rect x=".2" y=".2" width="2.200" height="2" fill="#ddd"/><rect x=".2" y="3.200" width="2.200" height="2" fill="#ddd"/><rect x=".2" y="6.200" width="2.200" height="2" fill="#ddd"/><path d="M4.400 1.600c2.600-.8 4 .8 3.400 2.600l.8.200-1.400 1.600-1-1.800.8.100c.4-1.200-.6-2.200-2.400-1.700z" fill="#ddd"/><path d="M4 6.600c1.200.8 2.400.6 3-.2" fill="none" stroke="#ddd" stroke-width=".8"/></svg>
<div style="left:592.6px;top:70px;width:14.2px;height:12px;background:#2b2b2b;border-radius:1px"></div>
<svg style="left:597.2px;top:72px;" width="6.4" height="8" viewBox="0 0 6.4 8"><path d="M.2 .2v7.600l6-3.800z" fill="#f2f2f2"/></svg>
<div style="left:591.6px;top:86.9px;width:15.8px;height:0.7px;background:#363636;"></div>
<svg style="left:596px;top:93.6px;" width="8.2" height="9" viewBox="0 0 8.2 9"><circle cx="2.400" cy="2.200" r="1.500" fill="none" stroke="#ddd" stroke-width=".8"/><path d="M4.600 2.200h3.400" stroke="#ddd" stroke-width=".8"/><rect x=".2" y="4.600" width="7.800" height="2.600" fill="#ddd"/><path d="M.2 8.400h7.800" stroke="#ddd" stroke-width=".8"/></svg>
<div style="left:591.6px;top:108.6px;width:15.8px;height:0.7px;background:#363636;"></div>
<span class="t" style="left:594.8px;top:113.70px;font-size:10px;line-height:12px;color:#e0e0e0;font-weight:normal;">A</span>
<div style="left:602.6px;top:115px;width:0.9px;height:10.4px;background:#e0e0e0;"></div>
<svg style="left:597px;top:130.6px;" width="6.6" height="9" viewBox="0 0 6.6 9"><path d="M3 0h3.400v1h-.8v8h-1v-8h-1v8h-1v-4.400a2.300 2.300 0 0 1 .4-4.600z" fill="#e0e0e0"/></svg>
<div style="left:609.8px;top:42.4px;width:197.20000000000005px;height:408.8px;background:#474747;"></div>
<div style="left:609.8px;top:42.4px;width:197.20000000000005px;height:4.8px;background:#434343;"></div>
<svg style="left:800px;top:44px;" width="3.8" height="2.6" viewBox="0 0 3.8 2.6"><path d="M.3 .2l1.200 1.100-1.200 1.100M2.100 .2l1.200 1.100-1.200 1.100" fill="none" stroke="#aaa" stroke-width=".5"/></svg>
<div style="left:609.3px;top:47.2px;width:0.8px;height:404px;background:#333;"></div>
<div style="left:609.8px;top:47.2px;width:197.20000000000005px;height:11.1px;background:#3c3c3c;"></div>
<div style="left:609.8px;top:47.6px;width:18.8px;height:10.8px;background:#484848;"></div>
<span class="t" style="left:614.4px;top:49.12px;font-size:5.7px;line-height:8px;color:#f2f2f2;font-weight:bold;">颜色</span>
<span class="t" style="left:633.6px;top:49.12px;font-size:5.7px;line-height:8px;color:#b4b4b4;font-weight:normal;">色板</span>
<svg style="left:798.6px;top:51.4px;" width="5.4" height="3.6" viewBox="0 0 5.4 3.6"><rect x="0" y="0" width="5.400" height=".9" fill="#b8b8b8"/><rect x="0" y="1.300" width="5.400" height=".9" fill="#b8b8b8"/><rect x="0" y="2.600" width="5.400" height=".9" fill="#b8b8b8"/></svg>
<div style="left:609.8px;top:58.3px;width:197.20000000000005px;height:61px;background:#484848;"></div>
<div style="left:621px;top:69.2px;width:9.8px;height:10px;background:#fff;border:.5px solid #999;box-sizing:border-box"></div>
<div style="left:615.4px;top:63.5px;width:10px;height:10.4px;background:#000;border:1px solid #cfcfcf;box-sizing:border-box"></div>
<div style="left:634.2px;top:61.3px;width:144.9px;height:56.4px;background:#7a2030;overflow:hidden"><div style="left:0;top:0.00px;width:144.9px;height:2.31px;background:linear-gradient(to right,rgb(250,250,250) 0%,rgb(247,192,197) 12.5%,rgb(242,141,151) 25%,rgb(238,98,111) 37.5%,rgb(235,63,79) 50%,rgb(231,36,54) 62.5%,rgb(226,16,37) 75%,rgb(222,4,26) 87.5%,rgb(219,0,22) 100%)"></div><div style="left:0;top:2.01px;width:144.9px;height:2.31px;background:linear-gradient(to right,rgb(241,241,241) 0%,rgb(238,185,190) 12.5%,rgb(234,136,146) 25%,rgb(231,95,108) 37.5%,rgb(228,61,77) 50%,rgb(225,35,53) 62.5%,rgb(221,15,36) 75%,rgb(217,4,25) 87.5%,rgb(214,0,21) 100%)"></div><div style="left:0;top:4.03px;width:144.9px;height:2.31px;background:linear-gradient(to right,rgb(232,232,232) 0%,rgb(230,178,183) 12.5%,rgb(226,132,141) 25%,rgb(224,91,104) 37.5%,rgb(221,59,74) 50%,rgb(218,34,51) 62.5%,rgb(215,15,35) 75%,rgb(212,4,25) 87.5%,rgb(209,0,21) 100%)"></div><div style="left:0;top:6.04px;width:144.9px;height:2.31px;background:linear-gradient(to right,rgb(223,223,223) 0%,rgb(221,172,176) 12.5%,rgb(218,127,136) 25%,rgb(216,88,101) 37.5%,rgb(214,58,72) 50%,rgb(212,33,50) 62.5%,rgb(209,15,34) 75%,rgb(207,4,24) 87.5%,rgb(205,0,20) 100%)"></div><div style="left:0;top:8.06px;width:144.9px;height:2.31px;background:linear-gradient(to right,rgb(214,214,214) 0%,rgb(213,165,169) 12.5%,rgb(210,122,131) 25%,rgb(209,85,97) 37.5%,rgb(207,56,70) 50%,rgb(206,32,48) 62.5%,rgb(203,14,33) 75%,rgb(201,4,23) 87.5%,rgb(200,0,20) 100%)"></div><div style="left:0;top:10.07px;width:144.9px;height:2.31px;background:linear-gradient(to right,rgb(205,205,205) 0%,rgb(204,159,163) 12.5%,rgb(202,118,126) 25%,rgb(201,82,94) 37.5%,rgb(200,54,67) 50%,rgb(199,31,47) 62.5%,rgb(197,14,32) 75%,rgb(196,3,23) 87.5%,rgb(195,0,19) 100%)"></div><div style="left:0;top:12.09px;width:144.9px;height:2.31px;background:linear-gradient(to right,rgb(196,196,196) 0%,rgb(195,152,156) 12.5%,rgb(194,113,121) 25%,rgb(194,79,90) 37.5%,rgb(193,52,65) 50%,rgb(193,30,45) 62.5%,rgb(191,13,31) 75%,rgb(190,3,22) 87.5%,rgb(190,0,19) 100%)"></div><div style="left:0;top:14.10px;width:144.9px;height:2.31px;background:linear-gradient(to right,rgb(187,187,187) 0%,rgb(187,145,149) 12.5%,rgb(186,108,116) 25%,rgb(186,76,87) 37.5%,rgb(186,50,63) 50%,rgb(186,29,44) 62.5%,rgb(185,13,30) 75%,rgb(185,3,21) 87.5%,rgb(184,0,18) 100%)"></div><div style="left:0;top:16.11px;width:144.9px;height:2.31px;background:linear-gradient(to right,rgb(178,178,178) 0%,rgb(178,138,142) 12.5%,rgb(178,103,111) 25%,rgb(178,73,83) 37.5%,rgb(179,48,60) 50%,rgb(179,28,42) 62.5%,rgb(179,12,29) 75%,rgb(179,3,21) 87.5%,rgb(179,0,18) 100%)"></div><div style="left:0;top:18.13px;width:144.9px;height:2.31px;background:linear-gradient(to right,rgb(168,168,168) 0%,rgb(169,132,135) 12.5%,rgb(170,99,106) 25%,rgb(171,70,80) 37.5%,rgb(172,46,58) 50%,rgb(172,27,41) 62.5%,rgb(172,12,28) 75%,rgb(173,3,20) 87.5%,rgb(174,0,17) 100%)"></div><div style="left:0;top:20.14px;width:144.9px;height:2.31px;background:linear-gradient(to right,rgb(159,159,159) 0%,rgb(161,125,128) 12.5%,rgb(162,94,100) 25%,rgb(163,67,76) 37.5%,rgb(164,44,55) 50%,rgb(165,25,39) 62.5%,rgb(166,12,27) 75%,rgb(167,3,19) 87.5%,rgb(168,0,17) 100%)"></div><div style="left:0;top:22.16px;width:144.9px;height:2.31px;background:linear-gradient(to right,rgb(150,150,150) 0%,rgb(152,118,121) 12.5%,rgb(153,89,95) 25%,rgb(155,63,72) 37.5%,rgb(157,42,53) 50%,rgb(158,24,37) 62.5%,rgb(159,11,26) 75%,rgb(161,3,19) 87.5%,rgb(163,0,16) 100%)"></div><div style="left:0;top:24.17px;width:144.9px;height:2.31px;background:linear-gradient(to right,rgb(141,141,141) 0%,rgb(143,111,114) 12.5%,rgb(145,84,90) 25%,rgb(147,60,69) 37.5%,rgb(149,40,50) 50%,rgb(151,23,36) 62.5%,rgb(153,11,25) 75%,rgb(155,3,18) 87.5%,rgb(157,0,16) 100%)"></div><div style="left:0;top:26.19px;width:144.9px;height:2.31px;background:linear-gradient(to right,rgb(132,132,132) 0%,rgb(135,105,107) 12.5%,rgb(137,79,85) 25%,rgb(139,57,65) 37.5%,rgb(142,38,48) 50%,rgb(144,22,34) 62.5%,rgb(146,10,24) 75%,rgb(148,3,17) 87.5%,rgb(151,0,15) 100%)"></div><div style="left:0;top:28.20px;width:144.9px;height:2.31px;background:linear-gradient(to right,rgb(123,123,123) 0%,rgb(126,98,100) 12.5%,rgb(128,74,80) 25%,rgb(131,54,61) 37.5%,rgb(134,36,45) 50%,rgb(137,21,32) 62.5%,rgb(139,10,22) 75%,rgb(142,3,16) 87.5%,rgb(145,0,14) 100%)"></div><div style="left:0;top:30.21px;width:144.9px;height:2.31px;background:linear-gradient(to right,rgb(114,114,114) 0%,rgb(117,91,93) 12.5%,rgb(120,69,74) 25%,rgb(123,50,57) 37.5%,rgb(126,34,42) 50%,rgb(129,20,30) 62.5%,rgb(132,9,21) 75%,rgb(135,2,16) 87.5%,rgb(138,0,14) 100%)"></div><div style="left:0;top:32.23px;width:144.9px;height:2.31px;background:linear-gradient(to right,rgb(105,105,105) 0%,rgb(108,84,86) 12.5%,rgb(111,64,69) 25%,rgb(114,47,53) 37.5%,rgb(118,32,40) 50%,rgb(121,19,29) 62.5%,rgb(124,9,20) 75%,rgb(128,2,15) 87.5%,rgb(132,0,13) 100%)"></div><div style="left:0;top:34.24px;width:144.9px;height:2.31px;background:linear-gradient(to right,rgb(96,96,96) 0%,rgb(99,77,79) 12.5%,rgb(102,59,64) 25%,rgb(106,43,49) 37.5%,rgb(110,29,37) 50%,rgb(114,17,27) 62.5%,rgb(117,8,19) 75%,rgb(121,2,14) 87.5%,rgb(125,0,12) 100%)"></div><div style="left:0;top:36.26px;width:144.9px;height:2.31px;background:linear-gradient(to right,rgb(87,87,87) 0%,rgb(90,70,72) 12.5%,rgb(93,54,58) 25%,rgb(97,40,45) 37.5%,rgb(101,27,34) 50%,rgb(105,16,25) 62.5%,rgb(109,8,18) 75%,rgb(114,2,13) 87.5%,rgb(118,0,12) 100%)"></div><div style="left:0;top:38.27px;width:144.9px;height:2.31px;background:linear-gradient(to right,rgb(77,77,77) 0%,rgb(81,63,65) 12.5%,rgb(85,49,53) 25%,rgb(89,36,41) 37.5%,rgb(93,25,31) 50%,rgb(97,15,23) 62.5%,rgb(101,7,16) 75%,rgb(106,2,12) 87.5%,rgb(111,0,11) 100%)"></div><div style="left:0;top:40.29px;width:144.9px;height:2.31px;background:linear-gradient(to right,rgb(68,68,68) 0%,rgb(72,56,57) 12.5%,rgb(76,44,47) 25%,rgb(80,33,37) 37.5%,rgb(84,23,28) 50%,rgb(89,14,21) 62.5%,rgb(93,6,15) 75%,rgb(98,2,11) 87.5%,rgb(103,0,10) 100%)"></div><div style="left:0;top:42.30px;width:144.9px;height:2.31px;background:linear-gradient(to right,rgb(59,59,59) 0%,rgb(63,49,50) 12.5%,rgb(67,39,41) 25%,rgb(71,29,33) 37.5%,rgb(75,20,25) 50%,rgb(80,12,19) 62.5%,rgb(84,6,14) 75%,rgb(89,2,10) 87.5%,rgb(95,0,9) 100%)"></div><div style="left:0;top:44.31px;width:144.9px;height:2.31px;background:linear-gradient(to right,rgb(50,50,50) 0%,rgb(54,42,43) 12.5%,rgb(57,33,36) 25%,rgb(61,25,29) 37.5%,rgb(66,18,22) 50%,rgb(70,11,17) 62.5%,rgb(75,5,12) 75%,rgb(80,1,9) 87.5%,rgb(86,0,9) 100%)"></div><div style="left:0;top:46.33px;width:144.9px;height:2.31px;background:linear-gradient(to right,rgb(41,41,41) 0%,rgb(44,34,35) 12.5%,rgb(48,28,30) 25%,rgb(52,21,24) 37.5%,rgb(56,15,19) 50%,rgb(61,9,14) 62.5%,rgb(65,5,11) 75%,rgb(71,1,8) 87.5%,rgb(77,0,8) 100%)"></div><div style="left:0;top:48.34px;width:144.9px;height:2.31px;background:linear-gradient(to right,rgb(32,32,32) 0%,rgb(35,27,28) 12.5%,rgb(38,22,24) 25%,rgb(42,17,20) 37.5%,rgb(46,12,15) 50%,rgb(50,8,12) 62.5%,rgb(55,4,9) 75%,rgb(60,1,7) 87.5%,rgb(66,0,7) 100%)"></div><div style="left:0;top:50.36px;width:144.9px;height:2.31px;background:linear-gradient(to right,rgb(23,23,23) 0%,rgb(25,20,20) 12.5%,rgb(28,16,18) 25%,rgb(32,13,15) 37.5%,rgb(35,9,12) 50%,rgb(39,6,9) 62.5%,rgb(44,3,7) 75%,rgb(49,1,6) 87.5%,rgb(54,0,5) 100%)"></div><div style="left:0;top:52.37px;width:144.9px;height:2.31px;background:linear-gradient(to right,rgb(14,14,14) 0%,rgb(16,12,12) 12.5%,rgb(18,10,11) 25%,rgb(21,8,10) 37.5%,rgb(24,6,8) 50%,rgb(27,4,6) 62.5%,rgb(31,2,5) 75%,rgb(35,1,4) 87.5%,rgb(40,0,4) 100%)"></div><div style="left:0;top:54.39px;width:144.9px;height:2.31px;background:linear-gradient(to right,rgb(5,5,5) 0%,rgb(6,4,4) 12.5%,rgb(7,4,4) 25%,rgb(8,3,4) 37.5%,rgb(10,3,3) 50%,rgb(12,2,3) 62.5%,rgb(15,1,2) 75%,rgb(18,0,2) 87.5%,rgb(21,0,2) 100%)"></div></div>
<svg style="left:632.4px;top:115.4px;" width="4" height="4" viewBox="0 0 4 4"><circle cx="2" cy="2" r="1.500" fill="none" stroke="#ddd" stroke-width=".6"/></svg>
<div style="left:788px;top:61.3px;width:10.9px;height:56.7px;background:#f00;background:linear-gradient(to bottom,#f00 0%,#f0f 16.600%,#00f 33.300%,#0ff 50%,#0f0 66.600%,#ff0 83.300%,#f00 100%)"></div>
<svg style="left:783.6px;top:115.6px;" width="3.6" height="4.4" viewBox="0 0 3.6 4.4"><path d="M0 0l3.600 2.200-3.600 2.200z" fill="#f0f0f0"/></svg>
<div style="left:609.8px;top:119.3px;width:197.20000000000005px;height:1.7px;background:#363636;"></div>
<div style="left:609.8px;top:121px;width:197.20000000000005px;height:11.3px;background:#3c3c3c;"></div>
<div style="left:649.8px;top:121.4px;width:18.2px;height:11px;background:#484848;"></div>
<span class="t" style="left:614.4px;top:124.12px;font-size:5.7px;line-height:8px;color:#b4b4b4;font-weight:normal;">学习</span>
<span class="t" style="left:633.6px;top:124.12px;font-size:5.7px;line-height:8px;color:#b4b4b4;font-weight:normal;">库</span>
<span class="t" style="left:653.6px;top:124.12px;font-size:5.7px;line-height:8px;color:#f2f2f2;font-weight:bold;">调整</span>
<svg style="left:798.6px;top:125.2px;" width="5.4" height="3.6" viewBox="0 0 5.4 3.6"><rect x="0" y="0" width="5.400" height=".9" fill="#b8b8b8"/><rect x="0" y="1.300" width="5.400" height=".9" fill="#b8b8b8"/><rect x="0" y="2.600" width="5.400" height=".9" fill="#b8b8b8"/></svg>
<div style="left:609.8px;top:132.3px;width:197.20000000000005px;height:115.7px;background:#484848;"></div>
<span class="t" style="left:614.6px;top:136.08px;font-size:5.8px;line-height:8px;color:#f0f0f0;font-weight:bold;">添加调整</span>
<svg style="left:636.5px;top:149.29999999999998px;" width="8.6" height="6.8" viewBox="0 0 8.6 6.8"><circle cx="4.300" cy="3.400" r="1.500" fill="#9c9c9c"/><path d="M4.300 0v1.300M4.300 5.500v1.300M.9 3.400h1.300M6.400 3.400h1.300M1.900 1l.9.900M5.800 4.900l.9.900M6.700 1l-.9.900M2.800 4.900l-.9.900" stroke="#9c9c9c" stroke-width=".6"/></svg>
<svg style="left:649.3000000000001px;top:149.29999999999998px;" width="8.6" height="6.8" viewBox="0 0 8.6 6.8"><path d="M0 6.400v-2.400l1-1.600.8 1 1-2.600 1 2 1-1.400 1 1.600.8-.8 1.200 1.800v2.400z" fill="#9c9c9c"/><path d="M0 6.600h8.600" stroke="#9c9c9c" stroke-width=".5"/></svg>
<svg style="left:661.9000000000001px;top:149.29999999999998px;" width="8.6" height="6.8" viewBox="0 0 8.6 6.8"><path d="M.4 .4v6h7.800M.4 4.400h7.800M.4 2.400h7.800M3 .4v6M5.600 .4v6" fill="none" stroke="#777" stroke-width=".5"/><path d="M.4 6.400c2.600-.4 5.200-2.600 7.800-6" fill="none" stroke="#9c9c9c" stroke-width=".8"/></svg>
<svg style="left:674.5px;top:149.29999999999998px;" width="8.6" height="6.8" viewBox="0 0 8.6 6.8"><rect x=".4" y=".4" width="7.800" height="6" fill="none" stroke="#9c9c9c" stroke-width=".8"/><path d="M.6 6.200l7.400-5.600v5.600z" fill="#9c9c9c"/><path d="M1.400 1.800h1.600M2.200 1v1.600" stroke="#9c9c9c" stroke-width=".5"/></svg>
<svg style="left:687.7px;top:149.29999999999998px;" width="8.6" height="6.8" viewBox="0 0 8.6 6.8"><path d="M.6 .6h7.400l-3.700 5.800z" fill="none" stroke="#9c9c9c" stroke-width=".9"/></svg>
<svg style="left:629.9000000000001px;top:163.4px;" width="8.6" height="6.8" viewBox="0 0 8.6 6.8"><rect x=".4" y=".4" width="7.800" height="6" fill="none" stroke="#9c9c9c" stroke-width=".8"/><rect x=".8" y="2.200" width="7" height="1.200" fill="#9c9c9c"/><rect x=".8" y="4.400" width="4" height="1.200" fill="#9c9c9c"/><rect x="5.600" y=".8" width="2.200" height="1" fill="#9c9c9c"/></svg>
<svg style="left:642.5px;top:163.4px;" width="8.6" height="6.8" viewBox="0 0 8.6 6.8"><path d="M4.300 .6v1M1.600 1.800h5.400" stroke="#9c9c9c" stroke-width=".7"/><path d="M.2 5.600l1.400-3.400 1.400 3.400zM5.600 5.600l1.400-3.400 1.400 3.400z" fill="#9c9c9c"/><path d="M3 6.400h2.600" stroke="#9c9c9c" stroke-width=".7"/></svg>
<svg style="left:655.3000000000001px;top:163.4px;" width="8.6" height="6.8" viewBox="0 0 8.6 6.8"><rect x=".4" y=".4" width="7.800" height="6" fill="none" stroke="#9c9c9c" stroke-width=".8"/><rect x="4.300" y=".6" width="3.700" height="5.600" fill="#9c9c9c"/></svg>
<svg style="left:668.1px;top:163.4px;" width="8.6" height="6.8" viewBox="0 0 8.6 6.8"><rect x=".4" y="1.200" width="5.600" height="4.200" rx=".8" fill="none" stroke="#9c9c9c" stroke-width=".8"/><circle cx="3.200" cy="3.300" r="1.300" fill="#9c9c9c"/><circle cx="6.400" cy="5" r="1.600" fill="#484848" stroke="#9c9c9c" stroke-width=".7"/></svg>
<svg style="left:681.3000000000001px;top:163.4px;" width="8.6" height="6.8" viewBox="0 0 8.6 6.8"><circle cx="4.300" cy="2.400" r="1.900" fill="none" stroke="#9c9c9c" stroke-width=".8"/><circle cx="3" cy="4.400" r="1.900" fill="none" stroke="#9c9c9c" stroke-width=".8"/><circle cx="5.600" cy="4.400" r="1.900" fill="none" stroke="#9c9c9c" stroke-width=".8"/></svg>
<svg style="left:693.9000000000001px;top:163.4px;" width="8.6" height="6.8" viewBox="0 0 8.6 6.8"><rect x=".4" y=".4" width="7.800" height="6" fill="none" stroke="#9c9c9c" stroke-width=".8"/><path d="M3 .4v6M5.600 .4v6M.4 2.400h7.800M.4 4.400h7.800" stroke="#9c9c9c" stroke-width=".6"/></svg>
<svg style="left:636.1px;top:177.5px;" width="8.6" height="6.8" viewBox="0 0 8.6 6.8"><rect x=".4" y=".4" width="7.800" height="6" fill="none" stroke="#9c9c9c" stroke-width=".8"/><path d="M.6 6.200l3.400-2.800v-2.800h-3.400z" fill="#9c9c9c" opacity=".7"/><path d="M2 5l4.400-3.600" stroke="#9c9c9c" stroke-width=".9"/></svg>
<svg style="left:649.1px;top:177.5px;" width="8.6" height="6.8" viewBox="0 0 8.6 6.8"><rect x=".4" y=".4" width="7.800" height="6" fill="none" stroke="#9c9c9c" stroke-width=".8"/><path d="M.6 6.200l7.400-5.600h-3l-4.400 3.400z" fill="#9c9c9c" opacity=".8"/></svg>
<svg style="left:661.9000000000001px;top:177.5px;" width="8.6" height="6.8" viewBox="0 0 8.6 6.8"><rect x=".4" y=".4" width="7.800" height="6" fill="none" stroke="#9c9c9c" stroke-width=".8"/><path d="M.6 6.200l7.400-5.600v2.400l-4.400 3.200z" fill="#9c9c9c"/><path d="M.6 3.600l4-3" stroke="#9c9c9c" stroke-width=".6"/></svg>
<svg style="left:674.5px;top:177.5px;" width="8.6" height="6.8" viewBox="0 0 8.6 6.8"><rect x=".4" y=".4" width="7.800" height="6" fill="none" stroke="#9c9c9c" stroke-width=".8"/><path d="M1.400 1.400l2.400 2-2.400 2zM7.200 1.400l-2.400 2 2.400 2z" fill="#9c9c9c"/><path d="M4.300 .4v6" stroke="#9c9c9c" stroke-width=".5"/></svg>
<svg style="left:687.3000000000001px;top:177.5px;" width="8.6" height="6.8" viewBox="0 0 8.6 6.8"><defs><linearGradient id="g2"><stop offset="0" stop-color="#555"/><stop offset="1" stop-color="#9c9c9c"/></linearGradient></defs><rect x=".4" y=".4" width="7.800" height="6" fill="url(#g2)" stroke="#9c9c9c" stroke-width=".8"/></svg>
<div style="left:609.8px;top:248px;width:197.20000000000005px;height:1.7px;background:#363636;"></div>
<div style="left:609.8px;top:249.7px;width:197.20000000000005px;height:10.1px;background:#373737;"></div>
<div style="left:609.8px;top:250px;width:58px;height:9.8px;background:#444;"></div>
<div style="left:609.8px;top:250px;width:19px;height:9.8px;background:#494949;"></div>
<span class="t" style="left:614.2px;top:252.12px;font-size:5.7px;line-height:8px;color:#f4f4f4;font-weight:bold;">图层</span>
<span class="t" style="left:633.8px;top:252.12px;font-size:5.7px;line-height:8px;color:#d0d0d0;font-weight:bold;">通道</span>
<span class="t" style="left:653.2px;top:252.12px;font-size:5.7px;line-height:8px;color:#d0d0d0;font-weight:bold;">路径</span>
<svg style="left:798.6px;top:253.6px;" width="5.4" height="3.6" viewBox="0 0 5.4 3.6"><rect x="0" y="0" width="5.400" height=".9" fill="#b8b8b8"/><rect x="0" y="1.300" width="5.400" height=".9" fill="#b8b8b8"/><rect x="0" y="2.600" width="5.400" height=".9" fill="#b8b8b8"/></svg>
<div style="left:609.8px;top:259.8px;width:197.20000000000005px;height:47px;background:#484848;"></div>
<div style="left:609.8px;top:306.8px;width:197.20000000000005px;height:131.4px;background:#444444;"></div>
<div style="left:793px;top:307.2px;width:14px;height:130.8px;background:#464646;border-left:.6px solid #414141"></div>
<div style="left:609.8px;top:438.2px;width:197.20000000000005px;height:13px;background:#474747;"></div>
<div style="left:609.8px;top:277.6px;width:197.20000000000005px;height:0.6px;background:#3d3d3d;"></div>
<div style="left:609.8px;top:292.2px;width:197.20000000000005px;height:0.6px;background:#3d3d3d;"></div>
<div style="left:609.8px;top:306.6px;width:197.20000000000005px;height:0.6px;background:#404040;"></div>
<div style="left:609.8px;top:438px;width:197.20000000000005px;height:0.6px;background:#3d3d3d;"></div>
<div style="left:614.2px;top:265.4px;width:37.4px;height:9.2px;background:#454545;border:.5px solid #3e3e3e;box-sizing:border-box;border-radius:1px"></div>
<svg style="left:616.6px;top:267.4px;" width="5" height="5.4" viewBox="0 0 5 5.4"><circle cx="3" cy="2" r="1.600" fill="none" stroke="#a6a6a6" stroke-width=".7"/><path d="M1.900 3.200l-1.600 2" stroke="#a6a6a6" stroke-width=".8"/></svg>
<span class="t" style="left:623.8px;top:266.15px;font-size:5.6px;line-height:8px;color:#9a9a9a;font-weight:normal;">类型</span>
<svg style="left:647px;top:269.4px;" width="3" height="2" viewBox="0 0 3 2"><path d="M.2.200l1.300 1.300 1.300-1.300" fill="none" stroke="#666" stroke-width=".6"/></svg>
<svg style="left:660.1px;top:266.6px;" width="7" height="7" viewBox="0 0 7 7"><rect x=".4" y=".8" width="6.200" height="5.200" fill="none" stroke="#a6a6a6" stroke-width=".8"/><path d="M.8 5.600l1.800-2.200 1.200 1.200 1-.8 1.400 1.800z" fill="#a6a6a6"/></svg>
<svg style="left:673.5px;top:266.6px;" width="7" height="7" viewBox="0 0 7 7"><circle cx="3.500" cy="3.500" r="2.600" fill="none" stroke="#a6a6a6" stroke-width=".8"/><path d="M5.400 1.700a2.600 2.600 0 0 1-3.700 3.700z" fill="#a6a6a6"/></svg>
<svg style="left:686.1px;top:266.6px;" width="7" height="7" viewBox="0 0 7 7"><path d="M.8 .6h5.400v1.600h-.6l-.3-.8h-1.300v4.400l.8.200v.4h-2.600v-.4l.8-.2v-4.400h-1.300l-.3.800h-.6z" fill="#a6a6a6"/></svg>
<svg style="left:698.7px;top:266.6px;" width="7" height="7" viewBox="0 0 7 7"><rect x="1.200" y="1.200" width="4.600" height="4.600" fill="none" stroke="#a6a6a6" stroke-width=".8"/><rect x=".2" y=".2" width="1.800" height="1.800" fill="#a6a6a6"/><rect x="5" y=".2" width="1.800" height="1.800" fill="#a6a6a6"/><rect x=".2" y="5" width="1.800" height="1.800" fill="#a6a6a6"/><rect x="5" y="5" width="1.800" height="1.800" fill="#a6a6a6"/></svg>
<svg style="left:711.2px;top:266.6px;" width="7" height="7" viewBox="0 0 7 7"><path d="M2 .4h3.200l1.400 1.400v4.800h-4.600z" fill="none" stroke="#a6a6a6" stroke-width=".7"/><rect x=".4" y="3" width="3.400" height="3.600" fill="#a6a6a6"/></svg>
<div style="left:726.9px;top:265.1px;width:3.4px;height:3.4px;background:#b0b0b0;border-radius:50%"></div>
<div style="left:614.2px;top:280.2px;width:57px;height:9px;background:#474747;border:.5px solid #414141;box-sizing:border-box;border-radius:1px"></div>
<span class="t" style="left:616.4px;top:281.15px;font-size:5.6px;line-height:8px;color:#8a8a8a;font-weight:normal;">正常</span>
<svg style="left:666px;top:284px;" width="3" height="2" viewBox="0 0 3 2"><path d="M.2.200l1.300 1.300 1.300-1.300" fill="none" stroke="#666" stroke-width=".6"/></svg>
<span class="t" style="left:673.7px;top:281.18px;font-size:5.5px;line-height:8px;color:#a8a8a8;font-weight:normal;">不透明度:</span>
<div style="left:703px;top:280.2px;width:27.6px;height:9px;background:#474747;border:.5px solid #414141;box-sizing:border-box;border-radius:1px"></div>
<span class="t" style="left:706px;top:281.72px;font-size:5.4px;line-height:7px;color:#666;font-weight:normal;">100%</span>
<svg style="left:725.6px;top:284px;" width="3" height="2" viewBox="0 0 3 2"><path d="M.2.200l1.300 1.300 1.300-1.300" fill="none" stroke="#5a5a5a" stroke-width=".6"/></svg>
<span class="t" style="left:613.4px;top:295.18px;font-size:5.5px;line-height:8px;color:#a0a0a0;font-weight:normal;">锁定:</span>
<svg style="left:629.6px;top:296.0px;" width="7" height="7" viewBox="0 0 7 7"><rect x=".4" y=".4" width="6.200" height="6.200" fill="none" stroke="#cfcfcf" stroke-width=".6" stroke-dasharray="1 .7"/><rect x="1.500" y="1.500" width="2" height="2" fill="#cfcfcf"/><rect x="3.500" y="3.500" width="2" height="2" fill="#cfcfcf"/></svg>
<svg style="left:641.7px;top:296.0px;" width="7" height="7" viewBox="0 0 7 7"><path d="M6.600 .4l-3.600 4 .6.600z" fill="#cfcfcf"/><path d="M2.800 4.600c-1 0-1 1.200-2.200 1.800 1.200.4 2.600-.2 2.800-1.200z" fill="#cfcfcf"/></svg>
<svg style="left:652.6px;top:296.0px;" width="7" height="7" viewBox="0 0 7 7"><path d="M3.500 .2l1.100 1.300h-.8v1.700h1.700v-.8l1.300 1.100-1.300 1.100v-.8h-1.700v1.700h.8l-1.100 1.300-1.100-1.300h.8v-1.700h-1.700v.8l-1.300-1.100 1.300-1.100v.8h1.700v-1.700h-.8z" fill="#cfcfcf"/></svg>
<svg style="left:664.3px;top:296.0px;" width="7" height="7" viewBox="0 0 7 7"><path d="M2 .4v4.600h4.600M.4 2h4.600v4.600" fill="none" stroke="#cfcfcf" stroke-width=".8"/></svg>
<svg style="left:676.4px;top:296.0px;" width="7" height="7" viewBox="0 0 7 7"><rect x="1" y="3" width="5" height="3.600" fill="#cfcfcf"/><path d="M2.100 3v-1a1.400 1.400 0 0 1 2.800 0v1" fill="none" stroke="#cfcfcf" stroke-width=".8"/></svg>
<span class="t" style="left:687.1px;top:295.18px;font-size:5.5px;line-height:8px;color:#a0a0a0;font-weight:normal;">填充:</span>
<div style="left:703px;top:295px;width:27.6px;height:9px;background:#474747;border:.5px solid #414141;box-sizing:border-box;border-radius:1px"></div>
<span class="t" style="left:706px;top:295.72px;font-size:5.4px;line-height:7px;color:#666;font-weight:normal;">100%</span>
<svg style="left:725.6px;top:298.8px;" width="3" height="2" viewBox="0 0 3 2"><path d="M.2.200l1.300 1.300 1.300-1.300" fill="none" stroke="#5a5a5a" stroke-width=".6"/></svg>
<svg style="left:699.5px;top:442.3px;" width="7" height="7" viewBox="0 0 7 7"><rect x=".3" y="2" width="3" height="3" rx="1.200" fill="none" stroke="#6a6a6a" stroke-width=".8"/><rect x="3.700" y="2" width="3" height="3" rx="1.200" fill="none" stroke="#6a6a6a" stroke-width=".8"/><path d="M2.400 3.500h2.200" stroke="#6a6a6a" stroke-width=".8"/></svg>
<span class="t" style="left:714.4px;top:441.88px;font-size:6.4px;line-height:8px;color:#7c7c7c;font-weight:normal;font-style:italic;font-family:'Liberation Serif',serif;">fx</span>
<svg style="left:728.3px;top:442.3px;" width="7" height="7" viewBox="0 0 7 7"><rect x=".2" y=".8" width="6.600" height="5.400" fill="#8e8e8e"/><circle cx="3.500" cy="3.500" r="1.500" fill="#474747"/></svg>
<svg style="left:742.3px;top:442.3px;" width="7" height="7" viewBox="0 0 7 7"><circle cx="3.500" cy="3.500" r="2.900" fill="#8e8e8e"/><path d="M5.600 1.500a2.900 2.900 0 0 0-4.100 4.100z" fill="#5a5a5a"/></svg>
<svg style="left:756.5px;top:442.3px;" width="7" height="7" viewBox="0 0 7 7"><path d="M.2 1h2.600l.8.900h3.200v4.300h-6.600z" fill="#8e8e8e"/></svg>
<svg style="left:770.9px;top:442.3px;" width="7" height="7" viewBox="0 0 7 7"><path d="M.6 .6h5.800v4l-1.800 1.800h-4z" fill="none" stroke="#8e8e8e" stroke-width=".8"/><path d="M6.400 4.600h-1.800v1.800" fill="none" stroke="#8e8e8e" stroke-width=".7"/></svg>
<svg style="left:785.2px;top:442.3px;" width="7" height="7" viewBox="0 0 7 7"><path d="M1.200 2h4.600l-.4 4.600h-3.800z" fill="#6c6c6c"/><path d="M.6 1.400h5.800M2.600 1.400v-.8h1.800v.8" fill="none" stroke="#6c6c6c" stroke-width=".7"/></svg>
<div style="left:476px;top:47.0px;width:111.7px;height:268px;background:#474747;"></div>
<div style="left:476px;top:47.0px;width:111.7px;height:11.4px;background:#3a3a3a;"></div>
<div style="left:508px;top:47.4px;width:19px;height:11.2px;background:#484848;"></div>
<span class="t" style="left:479.4px;top:50.05px;font-size:5.9px;line-height:8px;color:#b0b0b0;font-weight:normal;">历史记录</span>
<span class="t" style="left:511px;top:50.05px;font-size:5.9px;line-height:8px;color:#f4f4f4;font-weight:bold;">动作</span>
<svg style="left:566.8px;top:51.2px;" width="4.4" height="3.6" viewBox="0 0 4.4 3.6"><path d="M.3 .3l1.500 1.500-1.500 1.500M2.300 .3l1.500 1.500-1.500 1.500" fill="none" stroke="#b0b0b0" stroke-width=".6"/></svg>
<div style="left:575.2px;top:50px;width:0.6px;height:6.4px;background:#5a5a5a;"></div>
<svg style="left:579.4px;top:51.4px;" width="5.4" height="3.6" viewBox="0 0 5.4 3.6"><rect x="0" y="0" width="5.400" height=".9" fill="#8e8e8e"/><rect x="0" y="1.300" width="5.400" height=".9" fill="#8e8e8e"/><rect x="0" y="2.600" width="5.400" height=".9" fill="#8e8e8e"/></svg>
<div style="left:488.2px;top:58.4px;width:0.5px;height:236px;background:#444444;"></div>
<div style="left:499.4px;top:58.4px;width:0.5px;height:236px;background:#444444;"></div>
<div style="left:579.6px;top:58.4px;width:0.5px;height:236px;background:#424242;"></div>
<div style="left:476px;top:70.5px;width:103.6px;height:0.5px;background:#444444;"></div>
<svg style="left:479.8px;top:63.00000000000001px;" width="5.4" height="4.8" viewBox="0 0 5.4 4.8"><path d="M.5 2.600l1.500 1.600 2.900-3.700" fill="none" stroke="#a41c2c" stroke-width="1.100"/></svg>
<svg style="left:490.4px;top:62.60000000000001px;" width="6.4" height="5.6" viewBox="0 0 6.4 5.6"><rect x=".4" y=".4" width="5.600" height="4.800" fill="none" stroke="#cfcfcf" stroke-width=".7"/><path d="M1.600 2.800h3.200" stroke="#cfcfcf" stroke-width=".8"/></svg>
<svg style="left:502.8px;top:63.2px;" width="2.6" height="4.4" viewBox="0 0 2.6 4.4"><path d="M.4 .3l1.700 1.900-1.700 1.900" fill="none" stroke="#acacac" stroke-width=".85"/></svg>
<svg style="left:510px;top:62.400000000000006px;" width="8" height="6.2" viewBox="0 0 8 6.2"><path d="M.2 .4h2.800l.8 1h4v4.600h-7.600z" fill="#dcdcdc"/></svg>
<span class="t" style="left:522.2px;top:61.05px;font-size:5.9px;line-height:8px;color:#f2f2f2;font-weight:bold;">默认动作</span>
<div style="left:476px;top:81.12px;width:103.6px;height:0.5px;background:#444444;"></div>
<svg style="left:479.8px;top:73.62px;" width="5.4" height="4.8" viewBox="0 0 5.4 4.8"><path d="M.5 2.600l1.500 1.600 2.900-3.700" fill="none" stroke="#e6e6e6" stroke-width="1.100"/></svg>
<svg style="left:501.8px;top:74.82000000000001px;" width="4.4" height="2.6" viewBox="0 0 4.4 2.6"><path d="M.3 .4l1.900 1.700 1.900-1.700" fill="none" stroke="#b8b8b8" stroke-width=".7"/></svg>
<svg style="left:510px;top:73.02000000000001px;" width="8" height="6.2" viewBox="0 0 8 6.2"><path d="M.2 .4h2.800l.8 1h4v4.600h-7.600z" fill="none" stroke="#dcdcdc" stroke-width=".8"/><path d="M.2 6l1.200-3h6.400v3z" fill="#dcdcdc"/></svg>
<span class="t" style="left:522.2px;top:72.05px;font-size:5.9px;line-height:8px;color:#f2f2f2;font-weight:bold;">炭笔手绘艺术效果C...</span>
<div style="left:476px;top:91.74px;width:103.6px;height:0.5px;background:#444444;"></div>
<svg style="left:479.8px;top:84.24px;" width="5.4" height="4.8" viewBox="0 0 5.4 4.8"><path d="M.5 2.600l1.500 1.600 2.900-3.700" fill="none" stroke="#e6e6e6" stroke-width="1.100"/></svg>
<svg style="left:511.2px;top:84.44px;" width="2.6" height="4.4" viewBox="0 0 2.6 4.4"><path d="M.4 .3l1.700 1.900-1.700 1.900" fill="none" stroke="#acacac" stroke-width=".85"/></svg>
<span class="t" style="left:518.5px;top:83.02px;font-size:6px;line-height:8px;color:#f2f2f2;font-weight:bold;">CC, CC2014, CC20...</span>
<div style="left:476px;top:102.36px;width:103.6px;height:0.5px;background:#444444;"></div>
<svg style="left:479.8px;top:94.86px;" width="5.4" height="4.8" viewBox="0 0 5.4 4.8"><path d="M.5 2.600l1.500 1.600 2.900-3.700" fill="none" stroke="#e6e6e6" stroke-width="1.100"/></svg>
<svg style="left:511.2px;top:95.06px;" width="2.6" height="4.4" viewBox="0 0 2.6 4.4"><path d="M.4 .3l1.700 1.900-1.700 1.900" fill="none" stroke="#acacac" stroke-width=".85"/></svg>
<span class="t" style="left:518.5px;top:93.02px;font-size:6px;line-height:8px;color:#f2f2f2;font-weight:bold;">CC2015.5.1 +</span>
<div style="left:476px;top:112.97999999999999px;width:103.6px;height:0.5px;background:#444444;"></div>
<svg style="left:479.8px;top:105.47999999999999px;" width="5.4" height="4.8" viewBox="0 0 5.4 4.8"><path d="M.5 2.600l1.500 1.600 2.900-3.700" fill="none" stroke="#e6e6e6" stroke-width="1.100"/></svg>
<svg style="left:511.2px;top:105.67999999999999px;" width="2.6" height="4.4" viewBox="0 0 2.6 4.4"><path d="M.4 .3l1.700 1.900-1.700 1.900" fill="none" stroke="#acacac" stroke-width=".85"/></svg>
<span class="t" style="left:518.5px;top:104.02px;font-size:6px;line-height:8px;color:#f2f2f2;font-weight:bold;letter-spacing:.14px;">Neon Sign Maker ...</span>
<div style="left:476px;top:123.6px;width:103.6px;height:0.5px;background:#444444;"></div>
<svg style="left:479.8px;top:116.1px;" width="5.4" height="4.8" viewBox="0 0 5.4 4.8"><path d="M.5 2.600l1.500 1.600 2.900-3.700" fill="none" stroke="#e6e6e6" stroke-width="1.100"/></svg>
<svg style="left:511.2px;top:116.3px;" width="2.6" height="4.4" viewBox="0 0 2.6 4.4"><path d="M.4 .3l1.700 1.900-1.700 1.900" fill="none" stroke="#acacac" stroke-width=".85"/></svg>
<span class="t" style="left:518.5px;top:115.02px;font-size:6px;line-height:8px;color:#f2f2f2;font-weight:bold;">Yellow Neon</span>
<div style="left:476px;top:134.22px;width:103.6px;height:0.5px;background:#444444;"></div>
<svg style="left:511.2px;top:126.92px;" width="2.6" height="4.4" viewBox="0 0 2.6 4.4"><path d="M.4 .3l1.700 1.900-1.700 1.900" fill="none" stroke="#acacac" stroke-width=".85"/></svg>
<span class="t" style="left:518.5px;top:125.02px;font-size:6px;line-height:8px;color:#f2f2f2;font-weight:bold;letter-spacing:.53px;">--------------------</span>
<div style="left:476px;top:144.84px;width:103.6px;height:0.5px;background:#444444;"></div>
<svg style="left:479.8px;top:137.34px;" width="5.4" height="4.8" viewBox="0 0 5.4 4.8"><path d="M.5 2.600l1.500 1.600 2.900-3.700" fill="none" stroke="#e6e6e6" stroke-width="1.100"/></svg>
<svg style="left:511.2px;top:137.54000000000002px;" width="2.6" height="4.4" viewBox="0 0 2.6 4.4"><path d="M.4 .3l1.700 1.900-1.700 1.900" fill="none" stroke="#acacac" stroke-width=".85"/></svg>
<span class="t" style="left:518.5px;top:136.02px;font-size:6px;line-height:8px;color:#f2f2f2;font-weight:bold;">Red Neon</span>
<div style="left:476px;top:155.46px;width:103.6px;height:0.5px;background:#444444;"></div>
<svg style="left:479.8px;top:147.96px;" width="5.4" height="4.8" viewBox="0 0 5.4 4.8"><path d="M.5 2.600l1.500 1.600 2.900-3.700" fill="none" stroke="#e6e6e6" stroke-width="1.100"/></svg>
<svg style="left:511.2px;top:148.16000000000003px;" width="2.6" height="4.4" viewBox="0 0 2.6 4.4"><path d="M.4 .3l1.700 1.900-1.700 1.900" fill="none" stroke="#acacac" stroke-width=".85"/></svg>
<span class="t" style="left:518.5px;top:146.02px;font-size:6px;line-height:8px;color:#f2f2f2;font-weight:bold;">Purple Neon</span>
<div style="left:476px;top:166.08px;width:103.6px;height:0.5px;background:#444444;"></div>
<svg style="left:479.8px;top:158.58px;" width="5.4" height="4.8" viewBox="0 0 5.4 4.8"><path d="M.5 2.600l1.500 1.600 2.900-3.700" fill="none" stroke="#e6e6e6" stroke-width="1.100"/></svg>
<svg style="left:511.2px;top:158.78000000000003px;" width="2.6" height="4.4" viewBox="0 0 2.6 4.4"><path d="M.4 .3l1.700 1.900-1.700 1.900" fill="none" stroke="#acacac" stroke-width=".85"/></svg>
<span class="t" style="left:518.5px;top:157.02px;font-size:6px;line-height:8px;color:#f2f2f2;font-weight:bold;">Green Neon</span>
<div style="left:476px;top:176.7px;width:103.6px;height:0.5px;background:#444444;"></div>
<svg style="left:479.8px;top:169.2px;" width="5.4" height="4.8" viewBox="0 0 5.4 4.8"><path d="M.5 2.600l1.500 1.600 2.900-3.700" fill="none" stroke="#e6e6e6" stroke-width="1.100"/></svg>
<svg style="left:511.2px;top:169.4px;" width="2.6" height="4.4" viewBox="0 0 2.6 4.4"><path d="M.4 .3l1.700 1.900-1.700 1.900" fill="none" stroke="#acacac" stroke-width=".85"/></svg>
<span class="t" style="left:518.5px;top:168.02px;font-size:6px;line-height:8px;color:#f2f2f2;font-weight:bold;">White Neon</span>
<div style="left:476px;top:187.32px;width:103.6px;height:0.5px;background:#444444;"></div>
<svg style="left:479.8px;top:179.82px;" width="5.4" height="4.8" viewBox="0 0 5.4 4.8"><path d="M.5 2.600l1.500 1.600 2.900-3.700" fill="none" stroke="#e6e6e6" stroke-width="1.100"/></svg>
<svg style="left:511.2px;top:180.02px;" width="2.6" height="4.4" viewBox="0 0 2.6 4.4"><path d="M.4 .3l1.700 1.900-1.700 1.900" fill="none" stroke="#acacac" stroke-width=".85"/></svg>
<span class="t" style="left:518.5px;top:178.02px;font-size:6px;line-height:8px;color:#f2f2f2;font-weight:bold;">Pink Neon</span>
<div style="left:476px;top:197.94px;width:103.6px;height:0.5px;background:#444444;"></div>
<svg style="left:479.8px;top:190.44px;" width="5.4" height="4.8" viewBox="0 0 5.4 4.8"><path d="M.5 2.600l1.500 1.600 2.900-3.700" fill="none" stroke="#e6e6e6" stroke-width="1.100"/></svg>
<svg style="left:511.2px;top:190.64000000000001px;" width="2.6" height="4.4" viewBox="0 0 2.6 4.4"><path d="M.4 .3l1.700 1.900-1.700 1.900" fill="none" stroke="#acacac" stroke-width=".85"/></svg>
<span class="t" style="left:518.5px;top:189.02px;font-size:6px;line-height:8px;color:#f2f2f2;font-weight:bold;">Purprle Neon</span>
<div style="left:476px;top:208.56px;width:103.6px;height:0.5px;background:#444444;"></div>
<svg style="left:479.8px;top:201.06px;" width="5.4" height="4.8" viewBox="0 0 5.4 4.8"><path d="M.5 2.600l1.500 1.600 2.900-3.700" fill="none" stroke="#e6e6e6" stroke-width="1.100"/></svg>
<svg style="left:511.2px;top:201.26000000000002px;" width="2.6" height="4.4" viewBox="0 0 2.6 4.4"><path d="M.4 .3l1.700 1.900-1.700 1.900" fill="none" stroke="#acacac" stroke-width=".85"/></svg>
<span class="t" style="left:518.5px;top:200.02px;font-size:6px;line-height:8px;color:#f2f2f2;font-weight:bold;">Blue-Green Neon</span>
<div style="left:476px;top:219.17999999999998px;width:103.6px;height:0.5px;background:#444444;"></div>
<svg style="left:479.8px;top:211.67999999999998px;" width="5.4" height="4.8" viewBox="0 0 5.4 4.8"><path d="M.5 2.600l1.500 1.600 2.900-3.700" fill="none" stroke="#e6e6e6" stroke-width="1.100"/></svg>
<svg style="left:511.2px;top:211.88px;" width="2.6" height="4.4" viewBox="0 0 2.6 4.4"><path d="M.4 .3l1.700 1.900-1.700 1.900" fill="none" stroke="#acacac" stroke-width=".85"/></svg>
<span class="t" style="left:518.5px;top:210.02px;font-size:6px;line-height:8px;color:#f2f2f2;font-weight:bold;">Blue Neon</span>
<div style="left:476px;top:229.79999999999998px;width:103.6px;height:0.5px;background:#444444;"></div>
<svg style="left:511.2px;top:222.5px;" width="2.6" height="4.4" viewBox="0 0 2.6 4.4"><path d="M.4 .3l1.700 1.900-1.700 1.900" fill="none" stroke="#acacac" stroke-width=".85"/></svg>
<span class="t" style="left:518.5px;top:221.02px;font-size:6px;line-height:8px;color:#f2f2f2;font-weight:bold;letter-spacing:.53px;">--------------------</span>
<div style="left:476px;top:240.42px;width:103.6px;height:0.5px;background:#444444;"></div>
<svg style="left:479.8px;top:232.92px;" width="5.4" height="4.8" viewBox="0 0 5.4 4.8"><path d="M.5 2.600l1.500 1.600 2.900-3.700" fill="none" stroke="#e6e6e6" stroke-width="1.100"/></svg>
<svg style="left:511.2px;top:233.12px;" width="2.6" height="4.4" viewBox="0 0 2.6 4.4"><path d="M.4 .3l1.700 1.900-1.700 1.900" fill="none" stroke="#acacac" stroke-width=".85"/></svg>
<span class="t" style="left:518.5px;top:231.02px;font-size:6px;line-height:8px;color:#f2f2f2;font-weight:bold;">Size -25%</span>
<div style="left:476px;top:251.04px;width:103.6px;height:0.5px;background:#444444;"></div>
<svg style="left:479.8px;top:243.54px;" width="5.4" height="4.8" viewBox="0 0 5.4 4.8"><path d="M.5 2.600l1.500 1.600 2.900-3.700" fill="none" stroke="#e6e6e6" stroke-width="1.100"/></svg>
<svg style="left:511.2px;top:243.74px;" width="2.6" height="4.4" viewBox="0 0 2.6 4.4"><path d="M.4 .3l1.700 1.900-1.700 1.900" fill="none" stroke="#acacac" stroke-width=".85"/></svg>
<span class="t" style="left:518.5px;top:242.02px;font-size:6px;line-height:8px;color:#f2f2f2;font-weight:bold;">Size +25%</span>
<div style="left:476px;top:261.66px;width:103.6px;height:0.5px;background:#444444;"></div>
<svg style="left:479.8px;top:254.16px;" width="5.4" height="4.8" viewBox="0 0 5.4 4.8"><path d="M.5 2.600l1.500 1.600 2.900-3.700" fill="none" stroke="#e6e6e6" stroke-width="1.100"/></svg>
<svg style="left:510.2px;top:255.36px;" width="4.4" height="2.6" viewBox="0 0 4.4 2.6"><path d="M.3 .4l1.900 1.700 1.900-1.700" fill="none" stroke="#b8b8b8" stroke-width=".7"/></svg>
<span class="t" style="left:518.5px;top:253.05px;font-size:5.9px;line-height:8px;color:#f2f2f2;font-weight:bold;">图片大小批处理</span>
<div style="left:476px;top:272.28px;width:103.6px;height:0.5px;background:#444444;"></div>
<div style="left:525.2px;top:262.5799999999999px;width:53.6px;height:9.4px;background:#5a5a5a;"></div>
<svg style="left:479.8px;top:264.78px;" width="5.4" height="4.8" viewBox="0 0 5.4 4.8"><path d="M.5 2.600l1.500 1.600 2.900-3.700" fill="none" stroke="#e6e6e6" stroke-width="1.100"/></svg>
<svg style="left:519.1999999999999px;top:264.97999999999996px;" width="2.6" height="4.4" viewBox="0 0 2.6 4.4"><path d="M.4 .3l1.700 1.900-1.700 1.900" fill="none" stroke="#acacac" stroke-width=".85"/></svg>
<span class="t" style="left:528px;top:263.05px;font-size:5.9px;line-height:8px;color:#f2f2f2;font-weight:bold;">图像大小</span>
<div style="left:476px;top:282.9px;width:103.6px;height:0.5px;background:#444444;"></div>
<svg style="left:479.8px;top:275.4px;" width="5.4" height="4.8" viewBox="0 0 5.4 4.8"><path d="M.5 2.600l1.500 1.600 2.900-3.700" fill="none" stroke="#e6e6e6" stroke-width="1.100"/></svg>
<svg style="left:519.1999999999999px;top:275.59999999999997px;" width="2.6" height="4.4" viewBox="0 0 2.6 4.4"><path d="M.4 .3l1.700 1.900-1.700 1.900" fill="none" stroke="#acacac" stroke-width=".85"/></svg>
<span class="t" style="left:528px;top:274.05px;font-size:5.9px;line-height:8px;color:#f2f2f2;font-weight:bold;">存储</span>
<div style="left:476px;top:293.52px;width:103.6px;height:0.5px;background:#444444;"></div>
<svg style="left:479.8px;top:286.02px;" width="5.4" height="4.8" viewBox="0 0 5.4 4.8"><path d="M.5 2.600l1.500 1.600 2.900-3.700" fill="none" stroke="#e6e6e6" stroke-width="1.100"/></svg>
<svg style="left:519.1999999999999px;top:286.21999999999997px;" width="2.6" height="4.4" viewBox="0 0 2.6 4.4"><path d="M.4 .3l1.700 1.900-1.700 1.900" fill="none" stroke="#acacac" stroke-width=".85"/></svg>
<span class="t" style="left:528px;top:284.05px;font-size:5.9px;line-height:8px;color:#f2f2f2;font-weight:bold;">关闭</span>
<div style="left:476px;top:297.6px;width:111.7px;height:0.8px;background:#3e3e3e;"></div>
<div style="left:476px;top:312.6px;width:111.7px;height:2.4px;background:#404040;"></div>
<div style="left:515.6px;top:300.2px;width:13.4px;height:11.6px;background:#343434;border-radius:1px"></div>
<div style="left:489px;top:303.4px;width:4px;height:4px;background:#e0e0e0;"></div>
<div style="left:504px;top:303.4px;width:4px;height:4px;background:#8a8a8a;border-radius:50%"></div>
<svg style="left:519.4px;top:302.4px;" width="5" height="6" viewBox="0 0 5 6"><path d="M.2 .2v5.600l4.600-2.800z" fill="#f0f0f0"/></svg>
<svg style="left:533.4px;top:302.4px;" width="7.4" height="6" viewBox="0 0 7.4 6"><path d="M.2 .4h2.600l.8 1h3.600v4.400h-7z" fill="#dcdcdc"/></svg>
<svg style="left:551px;top:302.2px;" width="6.6" height="6.4" viewBox="0 0 6.6 6.4"><path d="M.5 .5h5.600v3.600l-2 1.800h-3.600z" fill="none" stroke="#dcdcdc" stroke-width=".9"/><path d="M6.100 4.100h-2v1.800" fill="none" stroke="#dcdcdc" stroke-width=".7"/></svg>
<svg style="left:566.6px;top:302.0px;" width="5.6" height="6.8" viewBox="0 0 5.6 6.8"><path d="M.8 2h4l-.4 4.600h-3.200z" fill="#7a7a7a"/><path d="M.2 1.400h5.200M2 1.400v-.8h1.600v.8" fill="none" stroke="#7a7a7a" stroke-width=".7"/></svg>
<div style="left:313.4px;top:101.6px;width:222.4px;height:81px;background:#ececec;border-radius:3px;box-shadow:0 7px 16px 2px rgba(0,0,0,.5),0 1px 4px rgba(0,0,0,.4),0 0 1px rgba(0,0,0,.6);overflow:hidden"><div style="left:0px;top:0px;width:222.4px;height:11.6px;background:#e2e2e2;background:linear-gradient(#eaeaea,#d8d8d8);border-bottom:.5px solid #bcbcbc"></div></div>
<span class="t" style="left:313.4px;top:103.12px;width:222.4px;text-align:center;font-size:7.2px;line-height:9px;color:#3a3a3a;font-weight:normal;">Adobe Photoshop</span>
<span class="t" style="left:369.6px;top:123.15px;font-size:7.1px;line-height:9px;color:#1a1a1a;font-weight:bold;font-family:'Noto Sans CJK SC',sans-serif;">命令<span style="font-feature-settings:'halt'">“</span>图像大小<span style="font-feature-settings:'halt'">”</span>当前不可用。</span>
<svg style="left:326.6px;top:125.6px" width="32.8" height="27" viewBox="0 0 32 27" preserveAspectRatio="none"><defs><linearGradient id="wg" x1="0" y1="0" x2="0" y2="1"><stop offset="0" stop-color="#f8e24a"/><stop offset="1" stop-color="#dba514"/></linearGradient></defs><path d="M16 1c.9 0 1.500 .4 2 1.300l12.600 21c.8 1.500-.1 3-1.900 3h-25.400c-1.800 0-2.700-1.500-1.900-3l12.600-21c.5-.9 1.100-1.300 2-1.300z" fill="url(#wg)" stroke="#c9981a" stroke-width=".5"/><path d="M14.800 7.500h2.400l-.5 9.500h-1.400z" fill="#fdf6d8"/><circle cx="16" cy="20.400" r="1.400" fill="#fdf6d8"/></svg>
<div style="left:345px;top:140.8px;width:14.2px;height:13.4px;background:#0a2230;border:.7px solid #176a88;box-sizing:border-box;border-radius:.8px"></div>
<span class="t" style="left:347.4px;top:141.66px;font-size:8.6px;line-height:11px;color:#58c4ee;font-weight:normal;">Ps</span>
<div style="left:435.2px;top:161.7px;width:40.6px;height:10.2px;background:#fff;border-radius:2px;box-shadow:0 .5px .8px rgba(0,0,0,.22),0 0 0 .3px rgba(0,0,0,.08)"></div>
<span class="t" style="left:435.2px;top:162.32px;width:40.6px;text-align:center;font-size:6.6px;line-height:9px;color:#2a2a2a;font-weight:500;">停止</span>
<div style="left:484.2px;top:161.2px;width:41.5px;height:10.5px;background:#2f7cf6;border-radius:2px;background:linear-gradient(#58a4fa,#1a6aee);box-shadow:0 .5px 1px rgba(0,0,0,.3)"></div>
<span class="t" style="left:484.3px;top:162.32px;width:41.5px;text-align:center;font-size:6.6px;line-height:9px;color:#eaf3ff;font-weight:normal;">继续</span>
<svg style="left:520.4px;top:304.6px;" width="6.4" height="9.6" viewBox="0 0 6.4 9.6"><path d="M.5 .5v7l1.700-1.500 1.200 2.800 1.200-.5-1.200-2.700h2.300z" fill="#111" stroke="#fff" stroke-width=".7"/></svg>
<span class="t" style="left:347.6px;top:456.4px;font-size:16px;line-height:21px;color:#fff;font-weight:500;letter-spacing:1.9px">一起听课，共同成长</span>
<span class="t" style="left:320.7px;width:20px;text-align:center;top:450.2px;font-size:13px;line-height:30px;color:#fff;font-weight:900;font-family:'Noto Sans CJK SC',sans-serif">·</span>
<span class="t" style="left:511.4px;width:20px;text-align:center;top:450.2px;font-size:13px;line-height:30px;color:#fff;font-weight:900;font-family:'Noto Sans CJK SC',sans-serif">·</span>
</div></body></html>
